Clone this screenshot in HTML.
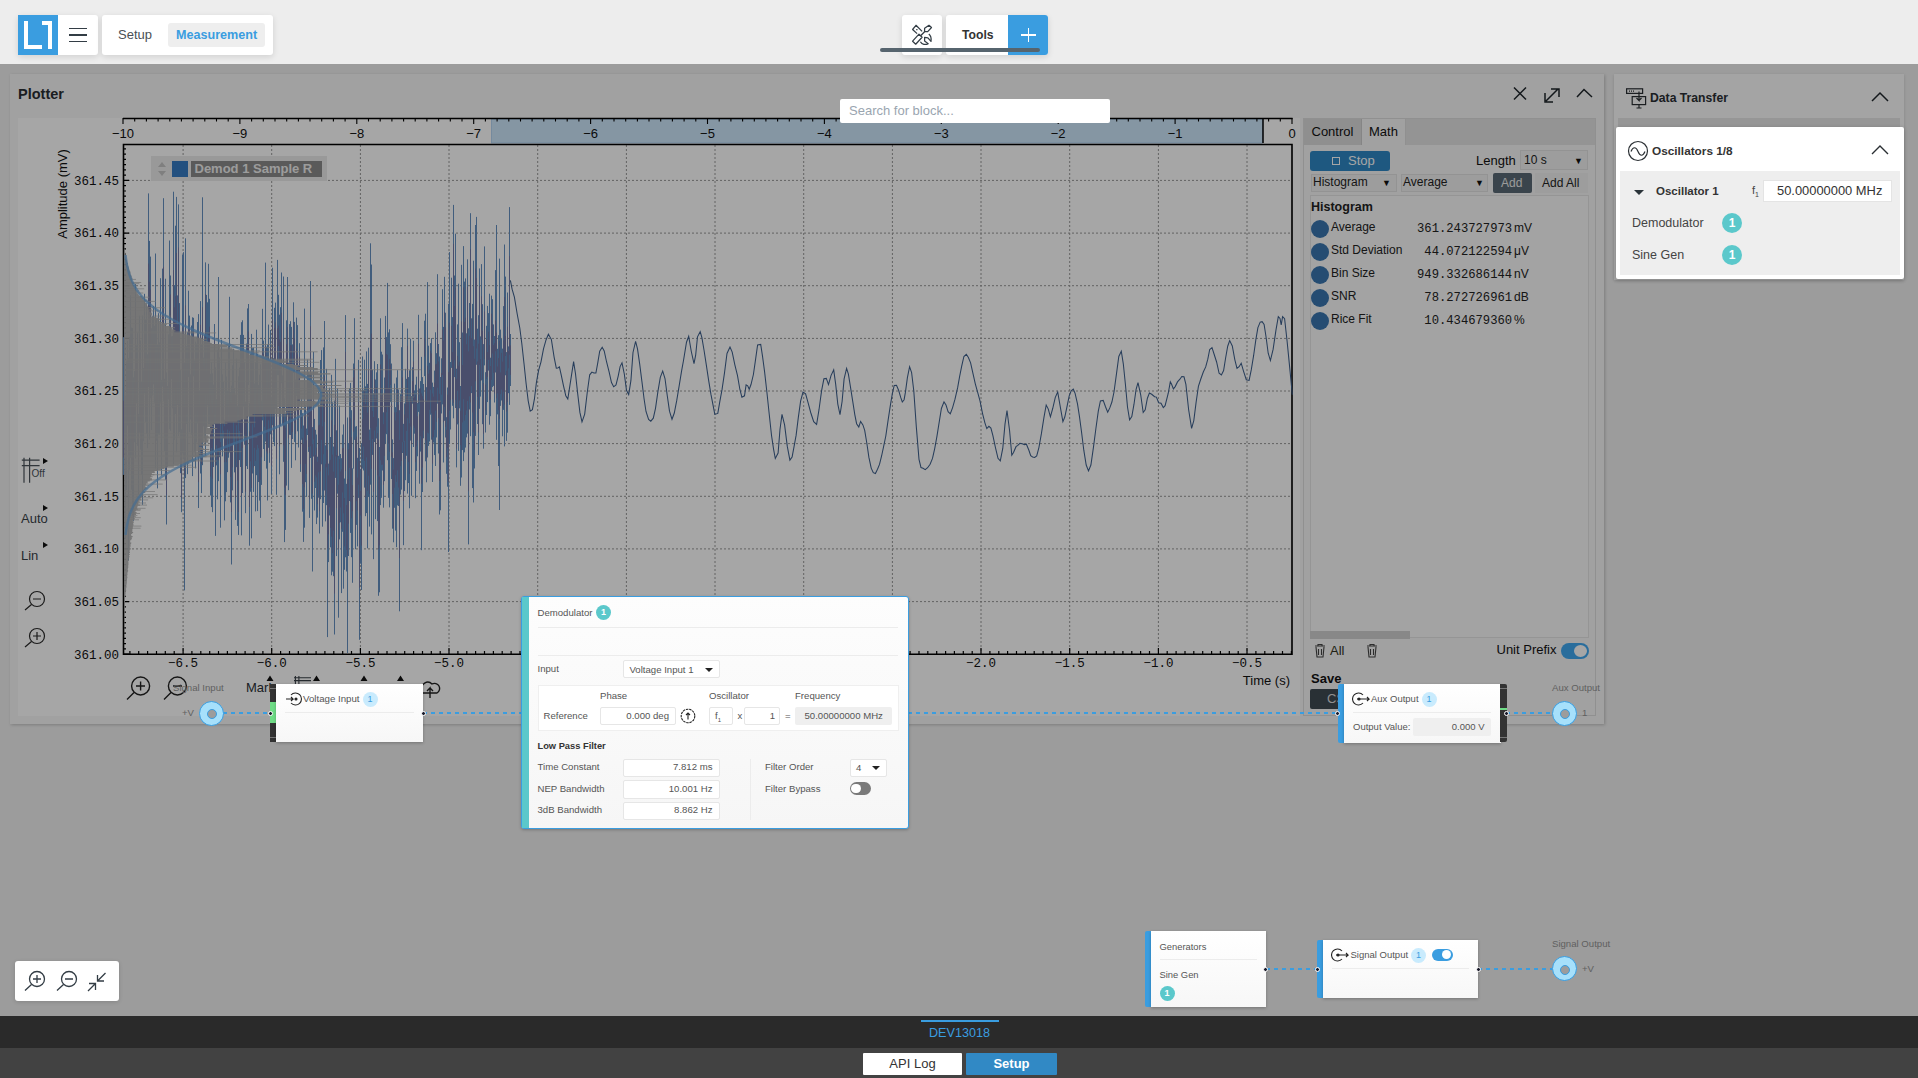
<!DOCTYPE html>
<html><head><meta charset="utf-8">
<style>
*{box-sizing:border-box}
html,body{margin:0;padding:0}
body{width:1918px;height:1078px;overflow:hidden;position:relative;background:#f0f0f0;font-family:"Liberation Sans",sans-serif;color:#333}
.abs{position:absolute}
.hdr{left:0;top:0;width:1918px;height:64px;background:#ededed}
.btn{position:absolute;background:#fff;border-radius:3px;box-shadow:0 2px 6px rgba(0,0,0,.12)}
.ovl{position:absolute;left:0;top:64px;width:1918px;height:952px;background:rgba(0,0,0,.35);z-index:50}
.hi{z-index:60}
.ftr{left:0;top:1016px;width:1918px;height:62px;background:#424242;z-index:70}
.blk{position:absolute;background:linear-gradient(#fff,#f7f7f7);box-shadow:0 1px 3px rgba(0,0,0,.25);z-index:60;font-size:9.5px;color:#555}
.badge{position:absolute;border-radius:50%;color:#fff;font-weight:bold;text-align:center}
.dot{position:absolute;width:5px;height:5px;margin:0.5px;border-radius:50%;background:#1a1a2a;border:0.8px solid #fff;z-index:62}
.conn{position:absolute;width:25px;height:25px;border-radius:50%;background:#a6e0fb;border:1.2px solid #3a9de0;z-index:60}
.conn::after{content:"";position:absolute;left:7.5px;top:7.5px;width:8px;height:8px;border-radius:50%;background:#9c9c9c;border:1px solid #3a9de0}
.dash{position:absolute;height:2px;z-index:59;background:repeating-linear-gradient(90deg,#3a9de0 0 4px,transparent 4px 8px)}
.inp{position:absolute;background:#fff;border:1px solid #e6e6e6;border-radius:2px}
.lbl{position:absolute;white-space:nowrap}
</style></head><body>
<!-- HEADER -->
<div class="abs hdr">
  <div class="btn" style="left:18px;top:15px;width:80px;height:40px;"></div>
  <div class="abs" style="left:18px;top:15px;width:40px;height:40px;background:#3a9de0">
    <div class="abs" style="left:6px;top:6px;width:4px;height:28px;background:#fff"></div>
    <div class="abs" style="left:6px;top:30px;width:18px;height:4px;background:#fff"></div>
    <div class="abs" style="left:24px;top:6px;width:10px;height:4px;background:#fff"></div>
    <div class="abs" style="left:30px;top:6px;width:4px;height:28px;background:#fff"></div>
  </div>
  <div class="abs" style="left:69px;top:27.5px;width:18px;height:1.6px;background:#333d45"></div>
  <div class="abs" style="left:69px;top:34px;width:18px;height:1.6px;background:#333d45"></div>
  <div class="abs" style="left:69px;top:40.5px;width:18px;height:1.6px;background:#333d45"></div>
  <div class="btn" style="left:102px;top:15px;width:171px;height:40px;"></div>
  <div class="lbl" style="left:118px;top:27px;font-size:13px;line-height:16px;color:#4a4f55">Setup</div>
  <div class="abs" style="left:168px;top:23px;width:97px;height:24px;background:#eeeeee;border-radius:3px"></div>
  <div class="lbl" style="left:176px;top:27px;font-size:12.6px;line-height:16px;font-weight:bold;color:#3a9de0">Measurement</div>
  <div class="btn" style="left:901.5px;top:15px;width:40px;height:40px;"></div>
  <svg class="abs" style="left:901.5px;top:15px" width="40" height="40" viewBox="0 0 40 40" fill="none" stroke="#333d45" stroke-width="1.25" stroke-linejoin="round">
    <path d="M20.1,16.4 L14,10.3 L10.6,14.5 L15.1,18.6 M14.2,14.6 h1.3"/>
    <path d="M22.6,16.7 L22.6,13.3 L27,10.3 L29.5,12.5 L25.7,16.7 Z M22.6,16.7 L18.6,20.8"/>
    <path d="M17,19.2 L20.1,22.3 L13.7,29.2 L10.6,26.2 Z"/>
    <path d="M26.8,18.9 C28.8,20.5 29.5,23 29,26.4 L25.9,22.8 L22.6,22.3 L22.6,26 L26.2,28.7 C23.5,30.2 20,29.5 18.4,26.7"/>
  </svg>
  <div class="btn" style="left:945.5px;top:15px;width:102.5px;height:40px;"></div>
  <div class="lbl" style="left:962px;top:27px;font-size:12.2px;line-height:16px;font-weight:bold;color:#333">Tools</div>
  <div class="abs" style="left:1008.3px;top:15px;width:39.7px;height:40px;background:#3a9de0;border-radius:0 3px 3px 0"></div>
  <div class="abs" style="left:1021px;top:34.3px;width:14.5px;height:1.5px;background:#fff"></div>
  <div class="abs" style="left:1027.5px;top:27.5px;width:1.5px;height:14.5px;background:#fff"></div>
  <div class="abs" style="left:880px;top:48px;width:160px;height:4px;border-radius:2px;background:#56646e"></div>
</div>

<!-- PLOTTER PANEL (under overlay) -->
<div class="abs" style="left:10px;top:74px;width:1594px;height:650px;background:#f7f7f7;box-shadow:1px 1px 3px rgba(0,0,0,.2)">
</div>
<div class="lbl" style="left:18px;top:86px;font-size:14.5px;line-height:17px;font-weight:bold;color:#2a2f33">Plotter</div>
<svg class="abs" style="left:1510px;top:84px" width="90" height="20" fill="none" stroke="#1f262b" stroke-width="1.5">
  <path d="M4,3.5 L16,15.5 M16,3.5 L4,15.5"/>
  <path d="M36,17 L48,5 M41,5 H49 V13 M35,9 V18 H43"/>
  <path d="M67,13 L74,5.5 L82,13"/>
</svg>
<div class="abs" style="left:18px;top:118px;width:1282px;height:598px;background:#fff"></div>
<svg class="abs" style="left:0;top:0" width="1918" height="1078" font-family="Liberation Mono" font-size="12.5" fill="#111">
<rect x="491.5" y="119" width="771" height="24" fill="#cde6fb" stroke="#a8cdf0" stroke-width="0.8"/><path d="M123,118.6H1292.6 M1263,118.6V143" stroke="#000" stroke-width="1.5"/><path d="M123.0,118V124 M134.7,118V121.5 M146.4,118V121.5 M158.1,118V121.5 M169.8,118V121.5 M181.4,118V121.5 M193.1,118V121.5 M204.8,118V121.5 M216.5,118V121.5 M228.2,118V121.5 M239.9,118V124 M251.6,118V121.5 M263.3,118V121.5 M275.0,118V121.5 M286.7,118V121.5 M298.4,118V121.5 M310.0,118V121.5 M321.7,118V121.5 M333.4,118V121.5 M345.1,118V121.5 M356.8,118V124 M368.5,118V121.5 M380.2,118V121.5 M391.9,118V121.5 M403.6,118V121.5 M415.2,118V121.5 M426.9,118V121.5 M438.6,118V121.5 M450.3,118V121.5 M462.0,118V121.5 M473.7,118V124 M485.4,118V121.5 M497.1,118V121.5 M508.8,118V121.5 M520.5,118V121.5 M532.1,118V121.5 M543.8,118V121.5 M555.5,118V121.5 M567.2,118V121.5 M578.9,118V121.5 M590.6,118V124 M602.3,118V121.5 M614.0,118V121.5 M625.7,118V121.5 M637.4,118V121.5 M649.0,118V121.5 M660.7,118V121.5 M672.4,118V121.5 M684.1,118V121.5 M695.8,118V121.5 M707.5,118V124 M719.2,118V121.5 M730.9,118V121.5 M742.6,118V121.5 M754.3,118V121.5 M765.9,118V121.5 M777.6,118V121.5 M789.3,118V121.5 M801.0,118V121.5 M812.7,118V121.5 M824.4,118V124 M836.1,118V121.5 M847.8,118V121.5 M859.5,118V121.5 M871.2,118V121.5 M882.9,118V121.5 M894.5,118V121.5 M906.2,118V121.5 M917.9,118V121.5 M929.6,118V121.5 M941.3,118V124 M953.0,118V121.5 M964.7,118V121.5 M976.4,118V121.5 M988.1,118V121.5 M999.8,118V121.5 M1011.4,118V121.5 M1023.1,118V121.5 M1034.8,118V121.5 M1046.5,118V121.5 M1058.2,118V124 M1069.9,118V121.5 M1081.6,118V121.5 M1093.3,118V121.5 M1105.0,118V121.5 M1116.7,118V121.5 M1128.3,118V121.5 M1140.0,118V121.5 M1151.7,118V121.5 M1163.4,118V121.5 M1175.1,118V124 M1186.8,118V121.5 M1198.5,118V121.5 M1210.2,118V121.5 M1221.9,118V121.5 M1233.5,118V121.5 M1245.2,118V121.5 M1256.9,118V121.5 M1268.6,118V121.5 M1280.3,118V121.5 M1292.0,118V124" stroke="#000" stroke-width="1.1"/><text x="123.0" y="138" text-anchor="middle" font-size="13" font-family="Liberation Sans">−10</text><text x="239.9" y="138" text-anchor="middle" font-size="13" font-family="Liberation Sans">−9</text><text x="356.8" y="138" text-anchor="middle" font-size="13" font-family="Liberation Sans">−8</text><text x="473.7" y="138" text-anchor="middle" font-size="13" font-family="Liberation Sans">−7</text><text x="590.6" y="138" text-anchor="middle" font-size="13" font-family="Liberation Sans">−6</text><text x="707.5" y="138" text-anchor="middle" font-size="13" font-family="Liberation Sans">−5</text><text x="824.4" y="138" text-anchor="middle" font-size="13" font-family="Liberation Sans">−4</text><text x="941.3" y="138" text-anchor="middle" font-size="13" font-family="Liberation Sans">−3</text><text x="1058.2" y="138" text-anchor="middle" font-size="13" font-family="Liberation Sans">−2</text><text x="1175.1" y="138" text-anchor="middle" font-size="13" font-family="Liberation Sans">−1</text><text x="1292.0" y="138" text-anchor="middle" font-size="13" font-family="Liberation Sans">0</text>
<path d="M183.1,145V653 M271.7,145V653 M360.4,145V653 M449.0,145V653 M537.7,145V653 M626.4,145V653 M715.0,145V653 M803.7,145V653 M892.4,145V653 M981.0,145V653 M1069.7,145V653 M1158.4,145V653 M1247.0,145V653 M124,601.6H1291 M124,548.9H1291 M124,496.3H1291 M124,443.6H1291 M124,391.0H1291 M124,338.4H1291 M124,285.7H1291 M124,233.1H1291 M124,180.4H1291" stroke="#989898" stroke-width="1" stroke-dasharray="2,2" fill="none"/><path d="M123.5,144.5H1292V654.2H123.5Z" stroke="#000" stroke-width="1.6" fill="none"/><path d="M129.9,654V651 M138.7,654V651 M147.6,654V651 M156.5,654V651 M165.3,654V651 M174.2,654V651 M183.1,654V648 M191.9,654V651 M200.8,654V651 M209.7,654V651 M218.5,654V651 M227.4,654V651 M236.3,654V651 M245.1,654V651 M254.0,654V651 M262.9,654V651 M271.7,654V648 M280.6,654V651 M289.5,654V651 M298.3,654V651 M307.2,654V651 M316.1,654V651 M324.9,654V651 M333.8,654V651 M342.7,654V651 M351.5,654V651 M360.4,654V648 M369.3,654V651 M378.1,654V651 M387.0,654V651 M395.9,654V651 M404.7,654V651 M413.6,654V651 M422.5,654V651 M431.3,654V651 M440.2,654V651 M449.0,654V648 M457.9,654V651 M466.8,654V651 M475.6,654V651 M484.5,654V651 M493.4,654V651 M502.2,654V651 M511.1,654V651 M520.0,654V651 M528.8,654V651 M537.7,654V648 M546.6,654V651 M555.4,654V651 M564.3,654V651 M573.2,654V651 M582.0,654V651 M590.9,654V651 M599.8,654V651 M608.6,654V651 M617.5,654V651 M626.4,654V648 M635.2,654V651 M644.1,654V651 M653.0,654V651 M661.8,654V651 M670.7,654V651 M679.6,654V651 M688.4,654V651 M697.3,654V651 M706.2,654V651 M715.0,654V648 M723.9,654V651 M732.8,654V651 M741.6,654V651 M750.5,654V651 M759.4,654V651 M768.2,654V651 M777.1,654V651 M786.0,654V651 M794.8,654V651 M803.7,654V648 M812.6,654V651 M821.4,654V651 M830.3,654V651 M839.2,654V651 M848.0,654V651 M856.9,654V651 M865.8,654V651 M874.6,654V651 M883.5,654V651 M892.4,654V648 M901.2,654V651 M910.1,654V651 M919.0,654V651 M927.8,654V651 M936.7,654V651 M945.6,654V651 M954.4,654V651 M963.3,654V651 M972.2,654V651 M981.0,654V648 M989.9,654V651 M998.8,654V651 M1007.6,654V651 M1016.5,654V651 M1025.4,654V651 M1034.2,654V651 M1043.1,654V651 M1052.0,654V651 M1060.8,654V651 M1069.7,654V648 M1078.6,654V651 M1087.4,654V651 M1096.3,654V651 M1105.2,654V651 M1114.0,654V651 M1122.9,654V651 M1131.8,654V651 M1140.6,654V651 M1149.5,654V651 M1158.4,654V648 M1167.2,654V651 M1176.1,654V651 M1185.0,654V651 M1193.8,654V651 M1202.7,654V651 M1211.6,654V651 M1220.4,654V651 M1229.3,654V651 M1238.2,654V651 M1247.0,654V648 M1255.9,654V651 M1264.8,654V651 M1273.6,654V651 M1282.5,654V651 M1291.4,654V651 M123,654.2H129 M123,648.9H126 M123,643.7H126 M123,638.4H126 M123,633.1H126 M123,627.9H126 M123,622.6H126 M123,617.4H126 M123,612.1H126 M123,606.8H126 M123,601.6H129 M123,596.3H126 M123,591.0H126 M123,585.8H126 M123,580.5H126 M123,575.2H126 M123,570.0H126 M123,564.7H126 M123,559.4H126 M123,554.2H126 M123,548.9H129 M123,543.7H126 M123,538.4H126 M123,533.1H126 M123,527.9H126 M123,522.6H126 M123,517.3H126 M123,512.1H126 M123,506.8H126 M123,501.5H126 M123,496.3H129 M123,491.0H126 M123,485.8H126 M123,480.5H126 M123,475.2H126 M123,470.0H126 M123,464.7H126 M123,459.4H126 M123,454.2H126 M123,448.9H126 M123,443.6H129 M123,438.4H126 M123,433.1H126 M123,427.8H126 M123,422.6H126 M123,417.3H126 M123,412.1H126 M123,406.8H126 M123,401.5H126 M123,396.3H126 M123,391.0H129 M123,385.7H126 M123,380.5H126 M123,375.2H126 M123,369.9H126 M123,364.7H126 M123,359.4H126 M123,354.2H126 M123,348.9H126 M123,343.6H126 M123,338.4H129 M123,333.1H126 M123,327.8H126 M123,322.6H126 M123,317.3H126 M123,312.0H126 M123,306.8H126 M123,301.5H126 M123,296.2H126 M123,291.0H126 M123,285.7H129 M123,280.5H126 M123,275.2H126 M123,269.9H126 M123,264.7H126 M123,259.4H126 M123,254.1H126 M123,248.9H126 M123,243.6H126 M123,238.3H126 M123,233.1H129 M123,227.8H126 M123,222.6H126 M123,217.3H126 M123,212.0H126 M123,206.8H126 M123,201.5H126 M123,196.2H126 M123,191.0H126 M123,185.7H126 M123,180.4H129 M123,175.2H126 M123,169.9H126 M123,164.6H126 M123,159.4H126 M123,154.1H126 M123,148.9H126" stroke="#000" stroke-width="1.2" fill="none"/>
<g font-family="Liberation Sans" font-size="13"><text x="1290" y="685" text-anchor="end">Time (s)</text>
<text transform="translate(67,194) rotate(-90)" text-anchor="middle">Amplitude (mV)</text></g>
<path d="M123.5,337.2V474.9M124.5,333.4V439.1M125.5,396.1V539.1M126.5,361.2V490.1M127.5,340.7V425.6M128.5,357.8V560.6M129.5,336.9V469.8M130.5,295.2V457.7M131.5,327.5V489.8M132.5,328.0V516.3M133.5,377.3V520.8M134.5,371.0V442.3M135.5,284.1V458.5M136.5,345.3V403.0M137.5,332.7V445.9M138.5,413.8V494.9M139.5,315.7V432.7M140.5,340.4V449.7M141.5,381.7V474.9M142.5,315.4V504.8M143.5,367.9V441.3M144.5,293.8V393.3M145.5,319.4V422.1M146.5,304.4V433.8M147.5,354.2V448.3M148.5,193.4V387.2M149.5,240.9V439.6M150.5,256.6V398.3M151.5,328.1V430.0M152.5,316.3V395.6M153.5,306.1V384.4M154.5,325.7V402.7M155.5,253.5V468.5M156.5,318.6V440.8M157.5,344.9V488.4M158.5,313.2V434.5M159.5,342.3V434.9M160.5,278.2V402.6M161.5,379.8V475.6M162.5,268.6V386.8M163.5,198.2V400.9M164.5,378.7V451.0M165.5,278.7V479.8M166.5,372.3V524.5M167.5,386.0V466.7M168.5,334.3V399.4M169.5,240.5V429.2M170.5,275.5V430.9M171.5,336.3V379.2M172.5,335.9V408.4M173.5,191.7V464.4M174.5,285.1V439.9M175.5,225.7V414.0M176.5,196.9V452.5M177.5,295.4V405.0M178.5,204.4V436.0M179.5,303.1V432.3M180.5,370.1V473.2M181.5,429.2V512.2M182.5,254.6V453.3M183.5,252.2V459.3M184.5,362.6V590.4M185.5,238.3V478.1M186.5,346.1V424.1M187.5,332.1V474.2M188.5,290.7V377.2M189.5,315.6V432.3M190.5,374.3V419.6M191.5,325.5V434.9M192.5,317.3V476.1M193.5,317.8V376.4M194.5,360.5V452.4M195.5,341.6V468.4M196.5,343.6V442.5M197.5,322.0V423.5M198.5,314.1V508.0M199.5,390.5V457.0M200.5,301.1V473.5M201.5,344.1V493.1M202.5,197.3V465.2M203.5,357.6V426.5M204.5,334.4V438.2M205.5,262.4V455.5M206.5,294.9V427.4M207.5,302.3V405.5M208.5,263.8V424.0M209.5,298.8V424.0M210.5,373.7V495.5M211.5,362.0V507.1M212.5,373.2V512.2M213.5,384.5V467.0M214.5,324.0V424.2M215.5,367.3V535.9M216.5,399.1V465.4M217.5,349.8V499.3M218.5,277.0V481.2M219.5,357.3V457.2M220.5,423.8V527.7M221.5,339.7V450.2M222.5,374.3V456.4M223.5,382.0V438.4M224.5,419.6V520.4M225.5,362.5V501.3M226.5,376.4V492.1M227.5,390.7V472.2M228.5,346.2V457.7M229.5,296.8V452.5M230.5,392.0V502.4M231.5,385.6V564.5M232.5,365.1V490.4M233.5,348.8V444.8M234.5,388.0V472.4M235.5,394.7V519.9M236.5,358.6V467.2M237.5,405.7V525.9M238.5,376.2V534.9M239.5,367.4V460.1M240.5,334.9V467.0M241.5,322.2V535.4M242.5,320.3V493.0M243.5,334.9V406.4M244.5,362.0V444.7M245.5,401.9V513.2M246.5,343.5V466.1M247.5,308.4V469.0M248.5,304.0V385.1M249.5,403.2V545.7M250.5,353.6V491.8M251.5,333.9V538.4M252.5,348.2V473.5M253.5,347.6V491.9M254.5,383.4V466.1M255.5,362.0V511.4M256.5,329.7V475.2M257.5,353.8V511.1M258.5,384.8V482.0M259.5,374.6V500.6M260.5,364.2V517.9M261.5,400.6V484.9M262.5,308.8V420.4M263.5,340.6V449.0M264.5,357.5V461.0M265.5,262.6V441.6M266.5,346.7V468.6M267.5,344.5V500.5M268.5,324.6V447.8M269.5,361.1V462.8M270.5,330.0V434.3M271.5,397.3V494.0M272.5,267.7V425.2M273.5,358.2V442.0M274.5,307.8V446.1M275.5,302.6V408.9M276.5,361.4V494.8M277.5,259.9V375.2M278.5,294.8V375.3M279.5,314.7V474.3M280.5,307.2V426.0M281.5,272.5V383.3M282.5,375.3V424.7M283.5,276.5V461.8M284.5,398.2V542.1M285.5,414.0V529.9M286.5,320.3V485.6M287.5,277.0V414.9M288.5,362.8V490.2M289.5,324.1V434.8M290.5,321.2V435.0M291.5,326.9V467.9M292.5,344.4V439.0M293.5,302.3V373.0M294.5,321.9V441.9M295.5,379.4V460.3M296.5,317.6V396.0M297.5,325.1V431.3M298.5,366.1V447.5M299.5,343.2V406.0M300.5,410.0V471.9M301.5,398.3V439.8M302.5,413.2V511.7M303.5,425.5V541.9M304.5,308.6V527.7M305.5,404.8V482.2M306.5,428.5V496.9M307.5,359.5V435.0M308.5,372.2V451.9M309.5,373.7V517.9M310.5,281.0V458.0M311.5,373.3V498.8M312.5,427.1V571.5M313.5,351.9V456.6M314.5,418.9V510.5M315.5,429.8V488.0M316.5,434.5V524.1M317.5,456.7V517.6M318.5,390.2V497.7M319.5,406.5V533.5M320.5,360.0V499.2M321.5,350.1V464.3M322.5,389.6V526.7M323.5,347.4V503.0M324.5,321.0V490.5M325.5,445.3V521.4M326.5,368.8V505.2M327.5,392.3V637.1M328.5,463.6V562.1M329.5,387.7V515.5M330.5,437.0V547.3M331.5,374.8V575.3M332.5,402.3V571.7M333.5,446.5V576.2M334.5,400.6V634.5M335.5,358.8V477.9M336.5,430.3V556.1M337.5,388.4V493.7M338.5,455.8V617.7M339.5,405.6V539.4M340.5,454.0V522.3M341.5,458.2V593.1M342.5,434.6V531.8M343.5,424.4V588.7M344.5,478.5V569.8M345.5,315.1V557.3M346.5,483.8V571.5M347.5,417.5V653.0M348.5,443.0V556.0M349.5,388.2V501.0M350.5,382.9V532.9M351.5,410.2V557.2M352.5,468.3V582.8M353.5,363.5V468.7M354.5,318.2V439.9M355.5,426.6V549.2M356.5,426.1V524.9M357.5,457.8V546.4M358.5,359.9V497.9M359.5,448.0V639.8M360.5,469.2V563.7M361.5,443.2V590.0M362.5,356.5V468.6M363.5,389.8V470.5M364.5,359.7V487.6M365.5,386.4V516.2M366.5,351.4V513.1M367.5,383.9V548.3M368.5,347.7V496.9M369.5,429.6V526.6M370.5,243.3V484.7M371.5,264.5V534.4M372.5,369.8V454.9M373.5,393.3V559.2M374.5,361.2V442.0M375.5,379.5V519.2M376.5,372.3V438.5M377.5,364.0V521.1M378.5,418.2V595.8M379.5,447.0V592.3M380.5,318.3V505.1M381.5,351.7V497.8M382.5,354.5V470.5M383.5,412.3V507.7M384.5,377.5V481.2M385.5,315.9V443.8M386.5,337.1V434.2M387.5,282.9V460.2M388.5,332.4V497.8M389.5,329.3V507.4M390.5,344.2V402.1M391.5,363.5V479.0M392.5,439.4V528.7M393.5,458.1V542.3M394.5,383.6V507.8M395.5,407.1V530.6M396.5,377.5V547.2M397.5,370.2V505.4M398.5,389.5V506.0M399.5,410.2V611.3M400.5,394.1V494.6M401.5,347.2V489.7M402.5,323.1V453.0M403.5,423.8V545.2M404.5,403.4V491.1M405.5,368.8V480.2M406.5,378.8V455.8M407.5,328.6V493.6M408.5,377.1V483.1M409.5,370.3V508.3M410.5,338.7V440.6M411.5,396.0V495.8M412.5,367.3V403.7M413.5,340.7V447.0M414.5,390.4V433.7M415.5,384.7V498.2M416.5,376.7V470.9M417.5,402.9V456.3M418.5,314.8V411.9M419.5,388.5V483.7M420.5,381.1V451.6M421.5,356.9V550.2M422.5,377.1V492.0M423.5,384.0V438.3M424.5,320.7V376.1M425.5,313.7V461.3M426.5,387.2V482.3M427.5,282.1V457.5M428.5,345.7V445.9M429.5,362.8V441.5M430.5,343.1V414.7M431.5,338.2V439.7M432.5,382.6V482.0M433.5,386.9V442.6M434.5,370.6V455.1M435.5,332.3V466.0M436.5,353.2V437.5M437.5,274.2V403.7M438.5,344.0V453.5M439.5,356.5V514.5M440.5,377.0V510.3M441.5,358.3V413.5M442.5,289.2V404.4M443.5,326.9V462.5M444.5,276.8V420.8M445.5,312.7V437.5M446.5,417.2V473.8M447.5,387.5V486.7M448.5,303.7V552.0M449.5,252.1V444.0M450.5,362.0V429.5M451.5,277.7V367.9M452.5,317.1V405.8M453.5,204.9V418.3M454.5,275.5V377.1M455.5,233.7V408.0M456.5,368.7V467.4M457.5,324.4V424.4M458.5,283.7V450.9M459.5,342.2V408.3M460.5,386.0V485.8M461.5,264.8V477.5M462.5,332.5V450.1M463.5,246.1V461.1M464.5,281.6V452.4M465.5,278.4V447.6M466.5,333.3V437.4M467.5,259.3V433.6M468.5,328.3V544.4M469.5,303.0V409.5M470.5,213.2V436.2M471.5,318.3V393.1M472.5,303.9V488.1M473.5,260.7V502.5M474.5,339.5V468.5M475.5,225.0V435.9M476.5,216.9V364.8M477.5,328.7V424.0M478.5,315.2V455.0M479.5,268.4V408.8M480.5,336.4V396.6M481.5,264.1V380.4M482.5,304.2V424.2M483.5,344.1V448.7M484.5,246.4V365.4M485.5,372.2V432.5M486.5,325.8V415.0M487.5,305.9V402.1M488.5,313.1V370.6M489.5,293.7V424.7M490.5,357.7V416.2M491.5,295.6V391.1M492.5,299.2V387.1M493.5,324.4V385.9M494.5,336.0V402.5M495.5,270.1V372.5M496.5,225.0V439.8M497.5,348.8V414.4M498.5,335.2V466.0M499.5,258.6V510.0M500.5,329.6V405.9M501.5,338.8V400.5M502.5,348.6V436.3M503.5,306.1V409.9M504.5,244.5V446.4M505.5,276.6V375.3M506.5,352.1V440.9M507.5,292.5V432.7M508.5,346.4V393.2M509.5,207.1V404.9M510.5,334.0V386.0" stroke="#6590c0" stroke-width="1" fill="none"/>
<path d="M123.5,400.6V457.5M124.5,395.6V425.3M125.5,434.8V479.7M126.5,380.2V459.1M127.5,382.0V420.0M128.5,394.6V466.5M129.5,376.8V459.7M130.5,339.8V405.2M131.5,356.1V442.4M132.5,405.1V473.8M133.5,397.8V475.5M134.5,382.3V414.3M135.5,305.2V411.3M136.5,359.8V382.2M137.5,360.4V424.4M138.5,421.9V465.4M139.5,334.9V379.6M140.5,357.6V421.2M141.5,394.1V441.6M142.5,342.4V430.0M143.5,382.4V410.1M144.5,334.6V387.4M145.5,356.0V411.5M146.5,369.5V418.7M147.5,365.1V405.0M148.5,263.6V336.3M149.5,281.8V408.1M150.5,289.6V343.3M151.5,345.7V401.5M152.5,340.1V385.1M153.5,344.4V372.9M154.5,342.1V388.3M155.5,398.9V451.9M156.5,353.9V425.5M157.5,384.1V429.3M158.5,346.6V391.4M159.5,365.6V411.4M160.5,325.3V362.7M161.5,387.7V426.0M162.5,315.5V341.9M163.5,266.9V389.9M164.5,390.2V433.7M165.5,326.7V438.2M166.5,385.7V494.9M167.5,406.9V435.7M168.5,344.4V376.2M169.5,337.9V418.0M170.5,294.5V387.9M171.5,347.5V366.7M172.5,353.9V392.5M173.5,270.0V434.7M174.5,307.3V389.4M175.5,296.1V400.6M176.5,253.0V424.3M177.5,324.6V381.5M178.5,247.4V420.2M179.5,337.4V372.5M180.5,380.5V415.8M181.5,441.9V497.6M182.5,327.6V427.8M183.5,331.1V440.5M184.5,406.6V475.8M185.5,305.4V430.2M186.5,376.1V414.0M187.5,358.6V413.8M188.5,326.7V358.2M189.5,327.5V416.8M190.5,388.8V410.0M191.5,365.8V421.6M192.5,338.4V452.6M193.5,329.5V366.9M194.5,375.2V433.9M195.5,359.2V413.8M196.5,358.0V419.0M197.5,353.9V411.0M198.5,336.4V482.1M199.5,405.2V441.0M200.5,324.8V446.4M201.5,348.3V464.1M202.5,307.2V435.8M203.5,365.1V412.1M204.5,368.8V427.0M205.5,294.0V394.2M206.5,371.7V414.6M207.5,342.9V393.8M208.5,334.3V406.6M209.5,326.6V377.6M210.5,395.1V476.5M211.5,403.7V448.1M212.5,413.0V478.7M213.5,400.2V425.9M214.5,338.7V414.1M215.5,420.7V466.1M216.5,407.1V445.2M217.5,379.8V459.5M218.5,348.7V460.4M219.5,396.3V449.5M220.5,442.1V474.3M221.5,389.8V434.1M222.5,389.3V424.1M223.5,407.1V430.7M224.5,426.3V462.2M225.5,395.2V450.6M226.5,415.0V462.2M227.5,405.0V429.6M228.5,421.1V453.8M229.5,369.9V431.3M230.5,402.1V477.0M231.5,403.0V512.0M232.5,392.7V467.4M233.5,392.3V422.1M234.5,392.8V436.4M235.5,411.2V497.4M236.5,376.4V425.2M237.5,420.7V480.6M238.5,437.0V512.0M239.5,383.1V431.0M240.5,364.1V441.9M241.5,358.4V496.2M242.5,356.6V448.1M243.5,350.4V388.5M244.5,387.6V434.6M245.5,408.5V491.8M246.5,362.1V445.4M247.5,344.1V421.9M248.5,331.6V368.9M249.5,431.4V507.0M250.5,394.0V461.3M251.5,362.4V487.9M252.5,380.5V424.2M253.5,389.4V467.5M254.5,427.4V447.9M255.5,412.4V460.8M256.5,393.4V449.7M257.5,387.2V444.9M258.5,405.3V448.2M259.5,411.9V482.2M260.5,392.8V479.9M261.5,410.7V457.4M262.5,350.6V384.6M263.5,354.1V416.9M264.5,364.9V426.9M265.5,345.8V411.8M266.5,398.8V451.4M267.5,386.2V453.6M268.5,357.4V420.3M269.5,391.9V452.9M270.5,347.2V413.1M271.5,408.9V465.6M272.5,319.3V404.4M273.5,370.5V432.2M274.5,328.0V404.4M275.5,322.4V383.0M276.5,413.0V458.7M277.5,328.3V366.4M278.5,325.6V346.0M279.5,339.3V446.3M280.5,341.9V389.2M281.5,312.7V364.2M282.5,380.3V401.2M283.5,338.5V445.3M284.5,425.9V487.5M285.5,427.8V495.0M286.5,344.3V420.3M287.5,326.9V382.2M288.5,401.5V438.3M289.5,364.9V418.8M290.5,345.1V386.2M291.5,345.3V440.1M292.5,382.4V432.1M293.5,322.0V359.4M294.5,338.4V422.8M295.5,393.4V434.0M296.5,348.7V388.6M297.5,354.4V414.6M298.5,391.2V419.8M299.5,356.9V400.4M300.5,441.3V464.2M301.5,414.3V428.6M302.5,437.8V484.0M303.5,443.6V508.9M304.5,413.5V487.2M305.5,410.7V463.9M306.5,440.3V473.8M307.5,381.7V416.1M308.5,410.0V447.0M309.5,405.8V499.2M310.5,326.3V446.2M311.5,395.6V456.7M312.5,444.1V493.6M313.5,386.2V439.4M314.5,429.5V481.7M315.5,455.0V475.4M316.5,447.6V477.4M317.5,461.9V504.1M318.5,425.4V472.3M319.5,424.7V511.3M320.5,404.8V471.4M321.5,391.3V439.8M322.5,426.4V490.5M323.5,386.4V454.3M324.5,375.8V421.8M325.5,463.9V495.4M326.5,401.4V467.3M327.5,449.7V548.3M328.5,475.4V534.3M329.5,461.5V507.3M330.5,459.8V527.9M331.5,420.3V536.6M332.5,454.6V553.1M333.5,471.6V530.6M334.5,424.9V593.6M335.5,394.2V456.4M336.5,455.0V508.1M337.5,408.9V457.3M338.5,484.8V548.7M339.5,459.1V522.9M340.5,471.5V507.5M341.5,469.5V528.8M342.5,448.4V492.4M343.5,447.9V513.3M344.5,498.0V546.4M345.5,351.9V471.1M346.5,505.0V549.8M347.5,479.1V555.5M348.5,449.4V523.6M349.5,417.2V467.8M350.5,418.3V501.6M351.5,437.1V518.3M352.5,485.1V511.2M353.5,377.4V431.7M354.5,367.6V420.1M355.5,438.9V529.9M356.5,436.6V501.2M357.5,477.6V510.5M358.5,402.3V484.7M359.5,461.1V587.7M360.5,490.9V515.5M361.5,465.6V545.5M362.5,419.1V459.1M363.5,399.4V446.5M364.5,391.1V460.9M365.5,404.0V497.6M366.5,395.4V457.3M367.5,412.6V490.9M368.5,369.1V475.7M369.5,440.2V494.1M370.5,340.2V428.0M371.5,333.6V468.8M372.5,411.0V439.0M373.5,417.0V491.8M374.5,379.0V430.5M375.5,398.5V469.9M376.5,387.0V426.7M377.5,433.2V475.3M378.5,439.5V548.9M379.5,476.5V545.3M380.5,364.5V460.2M381.5,395.7V464.8M382.5,394.0V464.6M383.5,424.2V484.9M384.5,393.2V455.8M385.5,337.6V433.4M386.5,354.0V412.2M387.5,354.9V405.6M388.5,388.0V443.6M389.5,358.9V451.9M390.5,364.4V385.0M391.5,403.9V456.8M392.5,452.4V494.0M393.5,469.6V528.2M394.5,412.4V487.7M395.5,420.4V475.1M396.5,412.1V481.8M397.5,389.2V470.3M398.5,404.7V487.5M399.5,439.9V558.1M400.5,401.7V466.2M401.5,396.3V461.0M402.5,377.4V442.1M403.5,441.9V500.8M404.5,414.5V440.8M405.5,404.0V459.0M406.5,395.9V430.9M407.5,345.8V418.2M408.5,401.1V462.1M409.5,423.3V473.9M410.5,396.5V426.6M411.5,400.8V444.3M412.5,381.1V396.3M413.5,361.4V425.6M414.5,397.2V427.8M415.5,394.8V462.2M416.5,400.6V446.3M417.5,416.3V440.4M418.5,343.7V403.6M419.5,414.2V469.8M420.5,388.2V436.3M421.5,393.4V483.7M422.5,396.2V467.5M423.5,399.1V430.6M424.5,337.9V356.6M425.5,383.6V440.4M426.5,401.1V459.2M427.5,365.8V432.7M428.5,373.7V433.4M429.5,369.9V409.8M430.5,350.8V389.6M431.5,353.3V413.3M432.5,393.5V463.6M433.5,396.6V437.1M434.5,382.6V429.9M435.5,364.4V410.7M436.5,363.8V421.9M437.5,323.6V387.7M438.5,361.4V418.1M439.5,393.8V481.0M440.5,401.2V469.9M441.5,372.9V394.7M442.5,329.6V375.1M443.5,340.4V422.2M444.5,312.3V406.8M445.5,327.5V426.8M446.5,429.9V457.2M447.5,394.7V448.2M448.5,372.2V481.9M449.5,322.6V410.6M450.5,367.7V400.2M451.5,325.8V359.7M452.5,352.1V399.3M453.5,243.9V402.9M454.5,306.0V360.3M455.5,287.9V400.1M456.5,378.8V448.7M457.5,355.8V390.8M458.5,365.7V423.0M459.5,361.7V400.6M460.5,410.8V445.2M461.5,321.4V450.1M462.5,365.1V422.4M463.5,287.4V399.2M464.5,321.9V420.6M465.5,317.7V415.0M466.5,344.3V410.4M467.5,287.0V401.0M468.5,351.4V491.2M469.5,335.7V396.3M470.5,249.2V402.5M471.5,338.2V386.1M472.5,318.5V412.5M473.5,346.2V432.3M474.5,358.7V449.8M475.5,268.5V381.3M476.5,278.1V348.5M477.5,361.5V396.8M478.5,343.7V432.4M479.5,286.0V364.9M480.5,359.2V380.8M481.5,296.3V339.4M482.5,330.7V379.6M483.5,383.0V433.7M484.5,311.5V359.1M485.5,384.6V410.4M486.5,339.0V379.0M487.5,352.1V376.8M488.5,331.7V359.8M489.5,345.1V400.2M490.5,366.0V399.6M491.5,313.7V379.9M492.5,324.4V353.5M493.5,345.1V372.8M494.5,343.2V393.5M495.5,320.5V351.2M496.5,332.6V398.3M497.5,366.5V393.4M498.5,358.1V410.2M499.5,340.7V418.8M500.5,372.4V394.1M501.5,352.8V389.5M502.5,361.6V408.5M503.5,340.4V391.7M504.5,297.0V404.7M505.5,336.1V356.0M506.5,370.8V411.5M507.5,326.7V401.8M508.5,351.0V368.3M509.5,256.2V354.7M510.5,345.4V374.8" stroke="#7c6490" stroke-width="1" fill="none" stroke-opacity="0.55"/>
<g fill="#b4b4b4" fill-opacity="0.7"><rect x="124" y="278.9" width="12.0" height="1"/><rect x="124" y="282.0" width="17.2" height="1"/><rect x="124" y="283.1" width="15.3" height="1"/><rect x="124" y="285.2" width="12.5" height="1"/><rect x="124" y="288.3" width="20.2" height="1"/><rect x="124" y="290.4" width="15.2" height="1"/><rect x="124" y="292.5" width="19.3" height="1"/><rect x="124" y="296.7" width="25.2" height="1"/><rect x="124" y="300.9" width="31.8" height="1"/><rect x="124" y="307.2" width="41.7" height="1"/><rect x="124" y="310.4" width="34.5" height="1"/><rect x="124" y="315.6" width="46.6" height="1"/><rect x="124" y="318.8" width="46.7" height="1"/><rect x="124" y="323.0" width="55.6" height="1"/><rect x="124" y="331.4" width="73.4" height="1"/><rect x="124" y="332.4" width="92.1" height="1"/><rect x="124" y="344.0" width="149.5" height="1"/><rect x="124" y="347.1" width="151.3" height="1"/><rect x="124" y="350.3" width="136.0" height="1"/><rect x="124" y="351.3" width="193.6" height="1"/><rect x="124" y="358.7" width="189.6" height="1"/><rect x="124" y="359.7" width="187.1" height="1"/><rect x="124" y="361.8" width="195.4" height="1"/><rect x="124" y="369.2" width="297.2" height="1"/><rect x="124" y="380.7" width="229.3" height="1"/><rect x="124" y="388.1" width="284.3" height="1"/><rect x="124" y="390.2" width="242.7" height="1"/><rect x="124" y="393.3" width="295.6" height="1"/><rect x="124" y="394.4" width="273.7" height="1"/><rect x="124" y="396.5" width="289.9" height="1"/><rect x="124" y="398.6" width="289.0" height="1"/><rect x="124" y="400.7" width="317.0" height="1"/><rect x="124" y="402.8" width="224.2" height="1"/><rect x="124" y="405.9" width="268.6" height="1"/><rect x="124" y="415.4" width="184.9" height="1"/><rect x="124" y="421.7" width="131.5" height="1"/><rect x="124" y="433.2" width="118.4" height="1"/><rect x="124" y="436.4" width="133.3" height="1"/><rect x="124" y="437.4" width="119.7" height="1"/><rect x="124" y="451.1" width="117.4" height="1"/><rect x="124" y="455.3" width="97.6" height="1"/><rect x="124" y="456.3" width="92.3" height="1"/><rect x="124" y="460.5" width="93.0" height="1"/><rect x="124" y="464.7" width="67.7" height="1"/><rect x="124" y="466.8" width="72.5" height="1"/><rect x="124" y="470.0" width="45.8" height="1"/><rect x="124" y="474.2" width="43.8" height="1"/><rect x="124" y="479.4" width="43.3" height="1"/><rect x="124" y="483.6" width="38.7" height="1"/><rect x="124" y="491.0" width="31.0" height="1"/><rect x="124" y="494.1" width="33.6" height="1"/><rect x="124" y="497.3" width="29.2" height="1"/><rect x="124" y="499.4" width="24.1" height="1"/><rect x="124" y="502.5" width="22.0" height="1"/><rect x="124" y="504.6" width="23.0" height="1"/><rect x="124" y="507.8" width="21.6" height="1"/><rect x="124" y="508.8" width="16.8" height="1"/><rect x="124" y="509.9" width="16.4" height="1"/><rect x="124" y="513.0" width="16.0" height="1"/><rect x="124" y="515.1" width="13.4" height="1"/><rect x="124" y="517.2" width="16.8" height="1"/><rect x="124" y="519.3" width="15.0" height="1"/><rect x="124" y="525.6" width="17.4" height="1"/><rect x="124" y="527.7" width="16.6" height="1"/></g>
<g fill="#b0b0b0" fill-opacity="0.92"><path d="M124.0,240.00 124.0,240.00 124.0,241.05 124.0,241.05 124.0,242.10 124.0,242.10 124.0,243.15 124.0,243.15 124.0,244.20 124.0,244.20 124.0,245.25 124.0,245.25 124.0,246.30 124.1,246.30 124.1,247.35 124.3,247.35 124.3,248.40 124.5,248.40 124.5,249.45 124.6,249.45 124.6,250.50 125.0,250.50 125.0,251.55 125.1,251.55 125.1,252.60 125.4,252.60 125.4,253.65 125.6,253.65 125.6,254.70 125.8,254.70 125.8,255.75 126.1,255.75 126.1,256.80 126.3,256.80 126.3,257.85 126.4,257.85 126.4,258.90 126.6,258.90 126.6,259.95 127.0,259.95 127.0,261.00 127.0,261.00 127.0,262.05 127.2,262.05 127.2,263.10 127.9,263.10 127.9,264.15 127.9,264.15 127.9,265.20 127.9,265.20 127.9,266.25 128.5,266.25 128.5,267.30 128.9,267.30 128.9,268.35 129.0,268.35 129.0,269.40 129.2,269.40 129.2,270.45 129.9,270.45 129.9,271.50 130.5,271.50 130.5,272.55 130.4,272.55 130.4,273.60 130.5,273.60 130.5,274.65 131.2,274.65 131.2,275.70 131.7,275.70 131.7,276.75 131.6,276.75 131.6,277.80 132.4,277.80 132.4,278.85 132.0,278.85 132.0,279.90 132.0,279.90 132.0,280.95 132.5,280.95 132.5,282.00 133.3,282.00 133.3,283.05 133.9,283.05 133.9,284.10 133.1,284.10 133.1,285.15 134.4,285.15 134.4,286.20 134.8,286.20 134.8,287.25 134.7,287.25 134.7,288.30 135.6,288.30 135.6,289.35 135.6,289.35 135.6,290.40 136.6,290.40 136.6,291.45 137.8,291.45 137.8,292.50 136.8,292.50 136.8,293.55 138.1,293.55 138.1,294.60 138.9,294.60 138.9,295.65 142.1,295.65 142.1,296.70 141.7,296.70 141.7,297.75 145.0,297.75 145.0,298.80 143.4,298.80 143.4,299.85 146.7,299.85 146.7,300.90 144.7,300.90 144.7,301.95 145.3,301.95 145.3,303.00 147.0,303.00 147.0,304.05 146.9,304.05 146.9,305.10 147.1,305.10 147.1,306.15 148.0,306.15 148.0,307.20 150.5,307.20 150.5,308.25 148.7,308.25 148.7,309.30 151.7,309.30 151.7,310.35 149.3,310.35 149.3,311.40 150.6,311.40 150.6,312.45 151.8,312.45 151.8,313.50 152.1,313.50 152.1,314.55 151.9,314.55 151.9,315.60 150.3,315.60 150.3,316.65 156.1,316.65 156.1,317.70 158.8,317.70 158.8,318.75 159.9,318.75 159.9,319.80 158.7,319.80 158.7,320.85 160.0,320.85 160.0,321.90 163.0,321.90 163.0,322.95 160.0,322.95 160.0,324.00 166.7,324.00 166.7,325.05 165.3,325.05 165.3,326.10 170.2,326.10 170.2,327.15 175.0,327.15 175.0,328.20 172.3,328.20 172.3,329.25 174.3,329.25 174.3,330.30 175.5,330.30 175.5,331.35 174.2,331.35 174.2,332.40 182.4,332.40 182.4,333.45 186.5,333.45 186.5,334.50 189.4,334.50 189.4,335.55 192.0,335.55 192.0,336.60 197.6,336.60 197.6,337.65 201.9,337.65 201.9,338.70 206.8,338.70 206.8,339.75 203.5,339.75 203.5,340.80 207.3,340.80 207.3,341.85 210.2,341.85 210.2,342.90 211.8,342.90 211.8,343.95 219.1,343.95 219.1,345.00 231.0,345.00 231.0,346.05 227.5,346.05 227.5,347.10 220.1,347.10 220.1,348.15 232.4,348.15 232.4,349.20 234.5,349.20 234.5,350.25 239.5,350.25 239.5,351.30 247.4,351.30 247.4,352.35 258.5,352.35 258.5,353.40 249.2,353.40 249.2,354.45 254.5,354.45 254.5,355.50 263.4,355.50 263.4,356.55 269.2,356.55 269.2,357.60 267.4,357.60 267.4,358.65 265.7,358.65 265.7,359.70 282.7,359.70 282.7,360.75 287.7,360.75 287.7,361.80 285.8,361.80 285.8,362.85 279.6,362.85 279.6,363.90 293.7,363.90 293.7,364.95 307.6,364.95 307.6,366.00 297.7,366.00 297.7,367.05 313.5,367.05 313.5,368.10 317.7,368.10 317.7,369.15 317.9,369.15 317.9,370.20 292.9,370.20 292.9,371.25 319.8,371.25 319.8,372.30 318.1,372.30 318.1,373.35 330.4,373.35 330.4,374.40 320.7,374.40 320.7,375.45 304.3,375.45 304.3,376.50 320.4,376.50 320.4,377.55 323.5,377.55 323.5,378.60 298.8,378.60 298.8,379.65 321.4,379.65 321.4,380.70 321.5,380.70 321.5,381.75 333.3,381.75 333.3,382.80 325.7,382.80 325.7,383.85 313.0,383.85 313.0,384.90 341.5,384.90 341.5,385.95 323.9,385.95 323.9,387.00 323.2,387.00 323.2,388.05 322.6,388.05 322.6,389.10 325.6,389.10 325.6,390.15 329.8,390.15 329.8,391.20 335.9,391.20 335.9,392.25 317.2,392.25 317.2,393.30 327.1,393.30 327.1,394.35 334.7,394.35 334.7,395.40 321.7,395.40 321.7,396.45 359.6,396.45 359.6,397.50 327.5,397.50 327.5,398.55 328.8,398.55 328.8,399.60 297.4,399.60 297.4,400.65 315.3,400.65 315.3,401.70 330.6,401.70 330.6,402.75 319.5,402.75 319.5,403.80 319.4,403.80 319.4,404.85 323.1,404.85 323.1,405.90 306.6,405.90 306.6,406.95 277.7,406.95 277.7,408.00 305.7,408.00 305.7,409.05 306.4,409.05 306.4,410.10 296.6,410.10 296.6,411.15 285.3,411.15 285.3,412.20 294.4,412.20 294.4,413.25 286.4,413.25 286.4,414.30 252.5,414.30 252.5,415.35 263.3,415.35 263.3,416.40 246.7,416.40 246.7,417.45 248.1,417.45 248.1,418.50 247.9,418.50 247.9,419.55 240.8,419.55 240.8,420.60 237.5,420.60 237.5,421.65 224.8,421.65 224.8,422.70 227.4,422.70 227.4,423.75 214.2,423.75 214.2,424.80 212.0,424.80 212.0,425.85 213.1,425.85 213.1,426.90 207.5,426.90 207.5,427.95 217.2,427.95 217.2,429.00 211.9,429.00 211.9,430.05 211.7,430.05 211.7,431.10 211.2,431.10 211.2,432.15 211.1,432.15 211.1,433.20 211.0,433.20 211.0,434.25 205.6,434.25 205.6,435.30 208.1,435.30 208.1,436.35 208.8,436.35 208.8,437.40 214.4,437.40 214.4,438.45 207.4,438.45 207.4,439.50 209.0,439.50 209.0,440.55 208.0,440.55 208.0,441.60 208.4,441.60 208.4,442.65 201.6,442.65 201.6,443.70 206.2,443.70 206.2,444.75 209.2,444.75 209.2,445.80 199.1,445.80 199.1,446.85 202.0,446.85 202.0,447.90 203.6,447.90 203.6,448.95 209.2,448.95 209.2,450.00 200.1,450.00 200.1,451.05 196.4,451.05 196.4,452.10 200.3,452.10 200.3,453.15 205.8,453.15 205.8,454.20 199.1,454.20 199.1,455.25 202.2,455.25 202.2,456.30 206.6,456.30 206.6,457.35 191.9,457.35 191.9,458.40 194.6,458.40 194.6,459.45 201.0,459.45 201.0,460.50 195.1,460.50 195.1,461.55 188.8,461.55 188.8,462.60 189.3,462.60 189.3,463.65 185.4,463.65 185.4,464.70 178.7,464.70 178.7,465.75 173.9,465.75 173.9,466.80 166.3,466.80 166.3,467.85 164.5,467.85 164.5,468.90 160.9,468.90 160.9,469.95 157.6,469.95 157.6,471.00 154.6,471.00 154.6,472.05 154.8,472.05 154.8,473.10 151.9,473.10 151.9,474.15 154.4,474.15 154.4,475.20 151.2,475.20 151.2,476.25 152.6,476.25 152.6,477.30 150.4,477.30 150.4,478.35 152.0,478.35 152.0,479.40 151.7,479.40 151.7,480.45 149.7,480.45 149.7,481.50 147.6,481.50 147.6,482.55 147.7,482.55 147.7,483.60 146.1,483.60 146.1,484.65 149.0,484.65 149.0,485.70 145.3,485.70 145.3,486.75 146.1,486.75 146.1,487.80 147.5,487.80 147.5,488.85 145.6,488.85 145.6,489.90 144.1,489.90 144.1,490.95 143.7,490.95 143.7,492.00 145.3,492.00 145.3,493.05 143.1,493.05 143.1,494.10 141.8,494.10 141.8,495.15 143.7,495.15 143.7,496.20 141.9,496.20 141.9,497.25 141.3,497.25 141.3,498.30 140.6,498.30 140.6,499.35 141.2,499.35 141.2,500.40 138.8,500.40 138.8,501.45 140.0,501.45 140.0,502.50 138.4,502.50 138.4,503.55 138.3,503.55 138.3,504.60 140.1,504.60 140.1,505.65 137.6,505.65 137.6,506.70 137.3,506.70 137.3,507.75 136.9,507.75 136.9,508.80 137.9,508.80 137.9,509.85 135.8,509.85 135.8,510.90 135.5,510.90 135.5,511.95 136.6,511.95 136.6,513.00 135.6,513.00 135.6,514.05 136.0,514.05 136.0,515.10 134.5,515.10 134.5,516.15 135.8,516.15 135.8,517.20 134.0,517.20 134.0,518.25 135.0,518.25 135.0,519.30 134.0,519.30 134.0,520.35 132.9,520.35 132.9,521.40 134.0,521.40 134.0,522.45 133.4,522.45 133.4,523.50 133.1,523.50 133.1,524.55 133.8,524.55 133.8,525.60 132.9,525.60 132.9,526.65 132.8,526.65 132.8,527.70 132.9,527.70 132.9,528.75 132.4,528.75 132.4,529.80 132.4,529.80 132.4,530.85 132.3,530.85 132.3,531.90 133.1,531.90 133.1,532.95 132.2,532.95 132.2,534.00 131.1,534.00 131.1,535.05 131.3,535.05 131.3,536.10 132.6,536.10 132.6,537.15 131.7,537.15 131.7,538.20 131.9,538.20 131.9,539.25 131.2,539.25 131.2,540.30 130.2,540.30 130.2,541.35 130.2,541.35 130.2,542.40 131.3,542.40 131.3,543.45 130.9,543.45 130.9,544.50 130.2,544.50 130.2,545.55 130.9,545.55 130.9,546.60 129.9,546.60 129.9,547.65 130.7,547.65 130.7,548.70 130.6,548.70 130.6,549.75 129.8,549.75 129.8,550.80 129.6,550.80 129.6,551.85 130.0,551.85 130.0,552.90 129.3,552.90 129.3,553.95 129.8,553.95 129.8,555.00 129.1,555.00 129.1,556.05 129.5,556.05 129.5,557.10 129.2,557.10 129.2,558.15 128.9,558.15 128.9,559.20 128.7,559.20 128.7,560.25 128.8,560.25 128.8,561.30 128.2,561.30 128.2,562.35 128.5,562.35 128.5,563.40 128.4,563.40 128.4,564.45 128.5,564.45 128.5,565.50 128.0,565.50 128.0,566.55 128.5,566.55 128.5,567.60 128.0,567.60 128.0,568.65 127.7,568.65 127.7,569.70 128.1,569.70 128.1,570.75 128.1,570.75 128.1,571.80 127.6,571.80 127.6,572.85 127.4,572.85 127.4,573.90 127.5,573.90 127.5,574.95 127.2,574.95 127.2,576.00 127.2,576.00 127.2,577.05 127.4,577.05 127.4,578.10 127.1,578.10 127.1,579.15 127.0,579.15 127.0,580.20 126.9,580.20 126.9,581.25 126.8,581.25 126.8,582.30 126.8,582.30 126.8,583.35 126.7,583.35 126.7,584.40 126.4,584.40 126.4,585.45 126.4,585.45 126.4,586.50 126.5,586.50 126.5,587.55 126.2,587.55 126.2,588.60 126.0,588.60 126.0,589.65 126.2,589.65 126.2,590.70 125.9,590.70 125.9,591.75 125.7,591.75 125.7,592.80 125.7,592.80 125.7,593.85 125.5,593.85 125.5,594.90 125.4,594.90 125.4,595.95 125.4,595.95 125.4,597.00 125.2,597.00 125.2,598.05 125.1,598.05 125.1,599.10 125.0,599.10 125.0,600.15 124.9,600.15 124.9,601.20 125.0,601.20 125.0,602.25 124.9,602.25 124.9,603.30 124.9,603.30 124.9,604.35 124.9,604.35 124.9,605.40 124.8,605.40 124.8,606.45 124.9,606.45 124.9,607.50 124.8,607.50 124.8,608.55 124.7,608.55 124.7,609.60 124.7,609.60 124.7,610.65 124.7,610.65 124.7,611.70 124.7,611.70 124.7,612.75 124.7,612.75 124.7,613.80 124.6,613.80 124.6,614.85 124.6,614.85 124.6,615.90 124.6,615.90 124.6,616.95 124.5,616.95 124.5,618.00 124.6,618.00 124.6,619.05 124.5,619.05 124.5,620.10 124.5,620.10 124.5,621.15 124.4,621.15 124.4,622.20 124.5,622.20 124.5,623.25 124.4,623.25 124.4,624.30 124.3,624.30 124.3,625.35 124.4,625.35 124.4,626.40 124.3,626.40 124.3,627.45 124.3,627.45 124.3,628.50 124.3,628.50 124.3,629.55 124.2,629.55 124.2,630.60 124.2,630.60 124.2,631.65 124.2,631.65 124.2,632.70 124.2,632.70 124.2,633.75 124.1,633.75 124.1,634.80 124.1,634.80 124.1,635.85 124.1,635.85 124.1,636.90 124.1,636.90 124.1,637.95 124.0,637.95 124.0,639.00 124.0,639.00 124.0,640.05 124.0,640.05 124.0,641.10 124.0,641.10 124.0,642.15 124.0,642.15 124.0,643.20 124.0,643.20 124.0,644.25 124.0,644.25 124.0,645.30 124.0,645.30 124.0,646.35 124.0,646.35 124.0,647.40 124.0,647.40 124.0,648.45 124.0,648.45 124.0,649.50 124.0,649.50 124.0,650.55 124.0,650.00Z"/></g>
<path d="M125.6,255.0 125.8,257.5 126.2,260.0 126.6,262.5 127.0,265.0 127.6,267.5 128.2,270.0 128.8,272.5 129.6,275.0 130.5,277.5 131.5,280.0 132.7,282.5 133.9,285.0 135.4,287.5 136.9,290.0 138.7,292.5 140.7,295.0 142.8,297.5 145.2,300.0 147.8,302.5 150.7,305.0 153.7,307.5 157.1,310.0 160.7,312.5 164.6,315.0 168.7,317.5 173.1,320.0 177.8,322.5 182.8,325.0 188.0,327.5 193.4,330.0 199.1,332.5 205.0,335.0 211.1,337.5 217.3,340.0 223.7,342.5 230.3,345.0 236.9,347.5 243.5,350.0 250.1,352.5 256.7,355.0 263.2,357.5 269.6,360.0 275.8,362.5 281.7,365.0 287.4,367.5 292.8,370.0 297.9,372.5 302.5,375.0 306.7,377.5 310.4,380.0 313.5,382.5 316.2,385.0 318.3,387.5 319.8,390.0 320.7,392.5 321.0,395.0 320.7,397.5 319.8,400.0 318.3,402.5 316.2,405.0 313.5,407.5 310.4,410.0 306.7,412.5 302.5,415.0 297.9,417.5 292.8,420.0 287.4,422.5 281.7,425.0 275.8,427.5 269.6,430.0 263.2,432.5 256.7,435.0 250.1,437.5 243.5,440.0 236.9,442.5 230.3,445.0 223.7,447.5 217.3,450.0 211.1,452.5 205.0,455.0 199.1,457.5 193.4,460.0 188.0,462.5 182.8,465.0 177.8,467.5 173.1,470.0 168.7,472.5 164.6,475.0 160.7,477.5 157.1,480.0 153.7,482.5 150.7,485.0 147.8,487.5 145.2,490.0 142.8,492.5 140.7,495.0 138.7,497.5 136.9,500.0 135.4,502.5 133.9,505.0 132.7,507.5 131.5,510.0 130.5,512.5 129.6,515.0 128.8,517.5 128.2,520.0 127.6,522.5 127.0,525.0 126.6,527.5 126.2,530.0 125.8,532.5 125.6,535.0" stroke="#6aa6e0" stroke-width="2.5" fill="none" stroke-opacity="0.7"/>
<path d="M510.4,280.3 512.1,289.2 514.4,297.2 517.2,314.0 519.8,328.0 521.8,343.5 524.0,363.5 526.1,383.5 528.2,400.8 530.2,411.1 532.4,409.7 534.4,399.2 536.4,382.7 538.6,370.4 541.0,361.8 543.5,348.8 546.1,339.7 548.4,334.3 551.4,339.6 554.1,357.1 556.3,368.2 557.8,368.0 559.4,366.9 561.2,374.8 563.4,385.4 565.8,395.9 567.8,399.0 570.7,380.3 573.6,361.7 575.5,373.7 577.7,393.8 579.9,412.4 582.0,421.8 584.7,414.1 587.3,392.0 589.7,374.8 591.9,372.1 593.9,373.0 595.9,373.0 597.8,362.7 599.7,351.2 602.2,347.2 604.2,351.0 606.6,362.0 609.1,371.9 611.5,382.6 613.7,386.8 616.0,385.0 618.2,376.1 620.1,366.6 622.0,362.8 624.3,374.0 626.5,390.3 628.7,394.6 630.9,380.7 633.0,352.5 635.6,341.4 637.5,348.9 639.7,364.1 641.9,381.4 644.1,399.0 646.0,411.5 648.6,419.5 650.8,421.2 653.3,418.2 655.5,408.3 657.9,391.7 660.3,377.4 662.7,371.1 665.0,378.5 667.2,395.3 669.5,411.2 672.0,419.3 674.3,413.0 676.7,400.7 679.2,385.7 681.6,370.9 683.5,360.5 686.5,342.2 688.7,336.3 691.3,351.5 694.0,363.7 695.7,354.8 697.5,336.8 700.2,331.7 701.9,337.6 704.0,350.0 706.3,364.9 708.6,380.1 710.9,394.2 713.0,404.8 714.8,414.4 717.8,413.4 719.9,401.2 722.1,389.2 724.5,372.8 727.0,353.5 730.0,347.1 732.2,352.1 734.8,364.6 737.5,375.7 739.9,389.5 741.9,397.3 744.5,395.8 746.1,384.9 747.7,385.9 749.2,389.3 751.0,384.5 753.4,374.5 755.3,361.4 757.6,344.9 760.7,344.4 762.5,356.1 764.6,371.9 766.9,392.2 769.2,414.0 771.5,435.3 773.6,449.3 775.3,458.5 778.1,453.1 780.0,429.2 782.0,414.4 784.6,424.9 787.3,446.4 789.9,460.1 792.1,457.0 794.0,446.9 796.1,435.4 798.3,417.6 800.6,401.2 803.0,392.0 805.6,393.8 808.2,403.2 810.7,412.5 813.7,421.7 816.6,424.5 819.0,409.7 821.6,390.7 823.9,378.8 826.3,378.4 828.5,384.6 831.0,375.6 833.7,369.9 835.7,384.4 837.8,404.1 840.0,414.7 842.1,401.5 844.1,378.9 846.6,368.4 848.4,374.2 850.5,387.1 852.7,401.1 854.8,414.6 856.6,423.7 858.8,427.0 860.6,421.4 862.9,424.9 864.7,430.4 866.8,443.0 868.9,457.4 871.2,468.1 873.3,472.7 875.4,473.5 877.5,469.3 879.5,464.4 881.6,456.0 883.7,446.2 885.8,436.0 888.0,420.9 890.2,406.4 892.3,393.8 894.2,385.4 896.5,385.2 898.7,390.5 900.7,397.4 902.3,402.0 904.1,399.7 905.4,392.4 907.4,377.7 909.6,366.7 911.6,372.5 913.8,391.0 916.3,426.6 919.0,459.3 921.0,467.5 923.0,468.3 925.2,469.6 927.6,467.7 930.1,464.2 932.5,458.4 934.7,448.6 936.8,437.1 938.8,424.6 941.4,408.5 944.0,401.9 946.0,405.0 948.1,411.7 950.3,413.8 952.6,407.6 955.0,399.2 957.6,387.9 959.6,376.6 961.7,366.2 963.9,356.5 966.3,354.3 968.4,357.5 970.6,362.9 973.0,373.7 975.3,383.8 977.4,391.3 980.0,400.9 982.5,413.3 984.9,422.8 986.8,428.6 988.9,426.3 990.9,428.1 992.9,435.6 995.4,447.3 998.0,458.3 1000.3,460.9 1002.8,448.2 1005.0,424.1 1007.0,410.5 1009.6,430.7 1011.8,455.2 1013.5,452.5 1016.0,446.7 1017.8,445.3 1019.9,443.3 1022.2,443.7 1024.5,444.6 1026.4,444.2 1028.8,450.0 1030.7,455.7 1032.6,457.0 1034.7,457.5 1036.7,456.0 1038.9,447.6 1041.4,433.7 1044.0,417.1 1046.2,405.0 1048.3,409.1 1050.4,416.8 1052.7,408.5 1055.3,397.4 1057.7,392.0 1060.2,406.4 1062.9,421.6 1064.8,417.0 1067.0,406.7 1069.2,395.9 1071.2,390.8 1073.3,389.2 1075.1,393.4 1077.5,403.9 1079.4,416.2 1081.5,431.8 1083.8,450.2 1086.2,465.0 1088.5,470.9 1090.9,465.0 1093.4,447.6 1095.9,428.5 1098.3,411.2 1100.4,401.0 1103.2,400.4 1105.5,406.7 1107.7,412.2 1109.8,407.9 1111.9,402.0 1114.0,392.0 1116.3,375.1 1118.8,356.5 1121.3,351.2 1123.3,363.8 1125.4,384.3 1127.5,407.0 1129.6,419.8 1131.8,416.5 1134.0,404.2 1136.1,389.3 1138.0,382.7 1140.7,394.8 1143.2,412.5 1145.2,409.9 1147.4,398.2 1149.4,393.1 1151.7,394.3 1154.6,396.7 1156.4,397.1 1158.7,402.8 1161.0,403.3 1163.3,407.6 1165.1,405.7 1168.2,393.5 1170.3,381.8 1171.6,384.3 1173.4,388.9 1175.2,386.6 1177.5,381.9 1179.9,379.2 1181.8,376.5 1184.0,376.8 1185.9,384.4 1188.6,409.5 1191.6,428.4 1193.8,420.6 1196.1,402.4 1198.4,386.4 1200.8,379.0 1203.3,372.0 1205.7,366.9 1207.8,359.2 1209.7,349.5 1212.0,347.6 1214.2,354.5 1216.6,362.0 1219.1,373.3 1221.4,374.9 1223.6,370.5 1225.7,357.5 1227.7,346.2 1229.7,340.6 1232.3,345.9 1234.8,359.6 1237.0,368.4 1239.1,366.7 1241.2,363.2 1243.5,371.1 1246.3,379.7 1249.1,380.4 1251.3,369.7 1253.6,355.7 1255.9,339.4 1257.9,327.6 1260.2,322.1 1262.1,321.7 1264.1,324.5 1266.1,337.2 1268.2,353.2 1270.4,360.6 1273.1,349.4 1276.0,329.9 1278.3,316.6 1280.0,318.4 1281.2,324.9 1282.6,316.6 1284.6,318.7 1287.1,341.3 1290.1,371.6 1292.3,394.7" stroke="#3d5f8c" stroke-width="1.05" fill="none"/>
<text x="183.1" y="667" text-anchor="middle">−6.5</text><text x="271.7" y="667" text-anchor="middle">−6.0</text><text x="360.4" y="667" text-anchor="middle">−5.5</text><text x="449.0" y="667" text-anchor="middle">−5.0</text><text x="537.7" y="667" text-anchor="middle">−4.5</text><text x="626.4" y="667" text-anchor="middle">−4.0</text><text x="715.0" y="667" text-anchor="middle">−3.5</text><text x="803.7" y="667" text-anchor="middle">−3.0</text><text x="892.4" y="667" text-anchor="middle">−2.5</text><text x="981.0" y="667" text-anchor="middle">−2.0</text><text x="1069.7" y="667" text-anchor="middle">−1.5</text><text x="1158.4" y="667" text-anchor="middle">−1.0</text><text x="1247.0" y="667" text-anchor="middle">−0.5</text><text x="119" y="658.5" text-anchor="end">361.00</text><text x="119" y="605.9" text-anchor="end">361.05</text><text x="119" y="553.2" text-anchor="end">361.10</text><text x="119" y="500.6" text-anchor="end">361.15</text><text x="119" y="447.9" text-anchor="end">361.20</text><text x="119" y="395.3" text-anchor="end">361.25</text><text x="119" y="342.7" text-anchor="end">361.30</text><text x="119" y="290.0" text-anchor="end">361.35</text><text x="119" y="237.4" text-anchor="end">361.40</text><text x="119" y="184.7" text-anchor="end">361.45</text>
</svg>
<!-- legend -->
<div class="abs" style="left:151px;top:156px;width:176px;height:25px;background:#ececec"></div>
<div class="abs" style="left:172px;top:161px;width:16px;height:16px;background:#377bc3"></div>
<svg class="abs" style="left:156px;top:160px" width="12" height="20"><path d="M2,7 L6,2 L10,7Z M2,11 L6,16 L10,11Z" fill="#c4c4c4"/></svg>
<div class="abs" style="left:191px;top:161px;width:131px;height:16px;background:#8a8a8a"></div>
<div class="lbl" style="left:194.5px;top:161px;font-size:13px;line-height:16px;font-weight:bold;color:#f0f0f0">Demod 1 Sample R</div>
<!-- left tools -->
<div class="lbl" style="left:31.5px;top:468px;font-size:10px;line-height:12px;color:#4a5259">Off</div>
<svg class="abs" style="left:18px;top:452px" width="36" height="200" fill="none" stroke="#2a2a2a" stroke-width="1.2">
 <path d="M6,5.8 V30.8 M11.6,5.8 V30.8 M3.8,8.2 H21.6 M3.8,13.6 H21.6" stroke="#4a5259"/>
 <path d="M25,6 l5,3 -5,3z M25,53 l5,3 -5,3z M25,90 l5,3 -5,3z" fill="#111" stroke="none"/>
 <circle cx="19" cy="147" r="7.5"/><path d="M15,147 h8 M13.5,152.5 L7,158"/>
 <circle cx="19" cy="184" r="7.5"/><path d="M15,184 h8 M19,180 v8 M13.5,189.5 L7,195"/>
</svg>
<div class="lbl" style="left:21px;top:510.5px;font-size:13px;color:#3a4148">Auto</div>
<div class="lbl" style="left:21px;top:547.5px;font-size:13px;color:#3a4148">Lin</div>
<!-- bottom tools -->
<svg class="abs" style="left:120px;top:670px" width="340" height="40" fill="none" stroke="#222" stroke-width="1.4">
 <circle cx="20.6" cy="16" r="9"/><path d="M16,16 h9 M20.6,11.5 v9 M14,22.5 L7,29.5"/>
 <circle cx="57.4" cy="16" r="9"/><path d="M53,16 h9 M51,22.5 L44,29.5"/>
 <path d="M146.5,11 l3.5,-5.5 3.5,5.5z M193,11 l3.5,-5.5 3.5,5.5z M240.5,11 l3.5,-5.5 3.5,5.5z M277,11 l3.5,-5.5 3.5,5.5z" fill="#111" stroke="none"/>
 <path d="M302,20 a6,6 0 0 1 10,-6 a5,5 0 0 1 5,9 h-15 a4,4 0 0 1 0,-3 M310,28 v-10 l-3,3 M310,18 l3,3"/>
</svg>
<div class="lbl" style="left:246px;top:680px;font-size:13px;color:#2a3036">Markers</div>
<svg class="abs" style="left:290px;top:672px" width="26" height="14" fill="none" stroke="#3a4148" stroke-width="1.1"><path d="M5.4,4 V14 M8.9,4 V14 M4,5.7 H21 M4,8.6 H21"/></svg>
<!-- math side panel -->
<div class="abs" style="left:1303px;top:118px;width:293px;height:598px;background:#f7f7f7;border:1px solid #ddd"></div>
<div class="abs" style="left:1304px;top:119px;width:291px;height:26px;background:#e4e4e4"></div>
<div class="abs" style="left:1304px;top:119px;width:58px;height:26px;background:#dcdcdc;border-right:1px solid #ccc"></div>
<div class="abs" style="left:1362px;top:119px;width:44px;height:26px;background:#f7f7f7;border-right:1px solid #ddd"></div>
<div class="lbl" style="left:1311.5px;top:124px;font-size:13px;line-height:15px;color:#111">Control</div>
<div class="lbl" style="left:1369px;top:124px;font-size:13px;line-height:15px;color:#111">Math</div>
<div class="abs" style="left:1310px;top:151px;width:80px;height:20px;background:#2e87c5;border-radius:3px"></div>
<div class="abs" style="left:1331.5px;top:157px;width:8px;height:8px;border:1px solid #fff"></div>
<div class="lbl" style="left:1348px;top:153px;font-size:13px;line-height:16px;color:#fff">Stop</div>
<div class="lbl" style="left:1476px;top:153px;font-size:13px;line-height:16px;color:#111">Length</div>
<div class="abs" style="left:1520px;top:150px;width:68px;height:20px;background:#f2f2f2;border:1px solid #e2e2e2"></div>
<div class="lbl" style="left:1524px;top:152px;font-size:12px;line-height:16px;color:#222">10 s</div>
<div class="lbl" style="left:1574px;top:153px;font-size:9px;line-height:16px;color:#111">&#9660;</div>
<div class="abs" style="left:1311px;top:174px;width:86px;height:18px;background:#f2f2f2;border:1px solid #e2e2e2"></div>
<div class="lbl" style="left:1313px;top:174px;font-size:12px;line-height:16px;color:#222">Histogram</div>
<div class="lbl" style="left:1382px;top:175px;font-size:9px;line-height:16px;color:#111">&#9660;</div>
<div class="abs" style="left:1401px;top:174px;width:87px;height:18px;background:#f2f2f2;border:1px solid #e2e2e2"></div>
<div class="lbl" style="left:1403px;top:174px;font-size:12px;line-height:16px;color:#222">Average</div>
<div class="lbl" style="left:1475px;top:175px;font-size:9px;line-height:16px;color:#111">&#9660;</div>
<div class="abs" style="left:1493px;top:173px;width:39px;height:20px;background:#5a6975;border-radius:2px"></div>
<div class="lbl" style="left:1501px;top:175px;font-size:12px;line-height:16px;color:#eee">Add</div>
<div class="abs" style="left:1535px;top:173px;width:53px;height:20px;background:#f2f2f2"></div>
<div class="lbl" style="left:1542px;top:175px;font-size:12px;line-height:16px;color:#222">Add All</div>
<div class="abs" style="left:1310px;top:195px;width:279px;height:443px;background:#fafafa;border:1px solid #e5e5e5"></div>
<div class="lbl" style="left:1311px;top:200px;font-size:12.5px;line-height:15px;font-weight:bold;color:#222">Histogram</div>
<div class="abs" style="left:1311px;top:220px;width:18px;height:18px;border-radius:50%;background:#3a76b0"></div>
<div class="lbl" style="left:1331px;top:220px;font-size:12px;line-height:14px;color:#222">Average</div>
<div class="lbl" style="left:1417px;top:221px;font-family:'Liberation Mono';font-size:12.2px;line-height:16px;color:#222;white-space:pre">361.243727973</div>
<div class="lbl" style="left:1514px;top:220px;font-size:12px;line-height:16px;color:#222">mV</div>
<div class="abs" style="left:1311px;top:243px;width:18px;height:18px;border-radius:50%;background:#3a76b0"></div>
<div class="lbl" style="left:1331px;top:243px;font-size:12px;line-height:14px;color:#222">Std Deviation</div>
<div class="lbl" style="left:1417px;top:244px;font-family:'Liberation Mono';font-size:12.2px;line-height:16px;color:#222;white-space:pre"> 44.072122594</div>
<div class="lbl" style="left:1514px;top:243px;font-size:12px;line-height:16px;color:#222">μV</div>
<div class="abs" style="left:1311px;top:266px;width:18px;height:18px;border-radius:50%;background:#3a76b0"></div>
<div class="lbl" style="left:1331px;top:266px;font-size:12px;line-height:14px;color:#222">Bin Size</div>
<div class="lbl" style="left:1417px;top:267px;font-family:'Liberation Mono';font-size:12.2px;line-height:16px;color:#222;white-space:pre">949.332686144</div>
<div class="lbl" style="left:1514px;top:266px;font-size:12px;line-height:16px;color:#222">nV</div>
<div class="abs" style="left:1311px;top:289px;width:18px;height:18px;border-radius:50%;background:#3a76b0"></div>
<div class="lbl" style="left:1331px;top:289px;font-size:12px;line-height:14px;color:#222">SNR</div>
<div class="lbl" style="left:1417px;top:290px;font-family:'Liberation Mono';font-size:12.2px;line-height:16px;color:#222;white-space:pre"> 78.272726961</div>
<div class="lbl" style="left:1514px;top:289px;font-size:12px;line-height:16px;color:#222">dB</div>
<div class="abs" style="left:1311px;top:312px;width:18px;height:18px;border-radius:50%;background:#3a76b0"></div>
<div class="lbl" style="left:1331px;top:312px;font-size:12px;line-height:14px;color:#222">Rice Fit</div>
<div class="lbl" style="left:1417px;top:313px;font-family:'Liberation Mono';font-size:12.2px;line-height:16px;color:#222;white-space:pre"> 10.434679360</div>
<div class="lbl" style="left:1514px;top:312px;font-size:12px;line-height:16px;color:#222">%</div>
<div class="abs" style="left:1310px;top:631px;width:100px;height:8px;background:#d2d2d2"></div>
<svg class="abs" style="left:1312px;top:643px" width="70" height="16" fill="none" stroke="#444" stroke-width="1.1">
 <path d="M3,3 h10 M6,3 v-1.5 h4 v1.5 M4,4 l1,10 h6 l1,-10 M6.5,6 v6 M9.5,6 v6"/>
 <path d="M55,3 h10 M58,3 v-1.5 h4 v1.5 M56,4 l1,10 h6 l1,-10 M58.5,6 v6 M61.5,6 v6"/>
</svg>
<div class="lbl" style="left:1330px;top:643px;font-size:13px;line-height:15px;color:#332">All</div>
<div class="lbl" style="left:1496.5px;top:642px;font-size:13px;line-height:16px;color:#111">Unit Prefix</div>
<div class="abs" style="left:1561px;top:643px;width:28px;height:16px;border-radius:8px;background:#40a8f0"></div>
<div class="abs" style="left:1574px;top:645px;width:13px;height:12px;border-radius:50%;background:#fff"></div>
<div class="lbl" style="left:1311px;top:671px;font-size:13px;line-height:16px;font-weight:bold;color:#111">Save</div>
<div class="abs" style="left:1310px;top:689px;width:60px;height:20px;background:#3f4a52;border-radius:2px"></div>
<div class="lbl" style="left:1327px;top:691px;font-size:13px;line-height:16px;color:#ddd">CSV</div>

<!-- DATA TRANSFER -->
<div class="abs" style="left:1614px;top:74px;width:290px;height:206px;background:#fcfcfc;box-shadow:0 1px 3px rgba(0,0,0,.15)"></div>
<svg class="abs" style="left:1624px;top:86px" width="24" height="24" fill="none" stroke="#2a2f33" stroke-width="1.2">
 <rect x="2.6" y="2.8" width="16" height="4.6"/><path d="M5,5.1 h1 M7,5.1 h1 M9,5.1 h1" stroke-width="1.4"/>
 <rect x="8.2" y="10.6" width="13.4" height="8"/><path d="M15,5.5 v9 l-2.5,-2.5 M15,14.5 l2.5,-2.5 M12.5,22 h5 M15,18.6 v3.4"/>
</svg>
<div class="lbl" style="left:1650px;top:90.5px;font-size:12.2px;line-height:15px;font-weight:bold;color:#2a2f33">Data Transfer</div>
<svg class="abs" style="left:1870px;top:88px" width="20" height="16" fill="none" stroke="#1f262b" stroke-width="1.5"><path d="M2,13 L10,5 L18,13"/></svg>
<div class="abs" style="left:1618px;top:118px;width:282px;height:10px;background:#e6e6e6"></div>

<!-- OVERLAY -->
<div class="ovl"></div>

<!-- HIGHLIGHTED -->
<div class="abs hi" style="left:840px;top:99px;width:270px;height:24px;background:#fff;border-radius:2px"></div>
<div class="lbl hi" style="left:849px;top:103px;font-size:13px;line-height:16px;color:#9aa5b0">Search for block...</div>

<!-- oscillators card -->
<div class="abs hi" style="left:1616px;top:127px;width:288px;height:152px;background:#fff;border-radius:2px;box-shadow:0 1px 4px rgba(0,0,0,.2)">
  <svg class="abs" style="left:10px;top:13px" width="24" height="24" fill="none" stroke="#2a2f33" stroke-width="1.2"><circle cx="12" cy="11" r="9.5"/><path d="M5,11.5 c2,-5 5,-5 7,0 c2,5 5,5 7,0"/></svg>
  <div class="lbl" style="left:36px;top:17px;font-size:11.8px;line-height:15px;font-weight:bold;color:#333">Oscillators 1/8</div>
  <svg class="abs" style="left:254px;top:16px" width="20" height="14" fill="none" stroke="#2a2f33" stroke-width="1.4"><path d="M2,11 L10,3 L18,11"/></svg>
  <div class="abs" style="left:4px;top:44px;width:280px;height:104px;background:#eeeeee"></div>
  <div class="abs" style="left:18px;top:62.5px;width:0;height:0;border-left:5.5px solid transparent;border-right:5.5px solid transparent;border-top:5.5px solid #2a3339"></div>
  <div class="lbl" style="left:40px;top:57px;font-size:11.5px;line-height:14px;font-weight:bold;color:#333">Oscillator 1</div>
  <div class="lbl" style="left:136px;top:56px;font-size:11px;line-height:15px;color:#444">f<sub style="font-size:7px">1</sub></div>
  <div class="abs" style="left:147px;top:52.5px;width:128.5px;height:22.5px;background:#fff;border:1px solid #e4e4e4"></div>
  <div class="lbl" style="left:161px;top:56px;font-size:12.9px;line-height:15px;color:#333">50.00000000 MHz</div>
  <div class="lbl" style="left:16px;top:89px;font-size:12.5px;line-height:15px;color:#444">Demodulator</div>
  <div class="badge" style="left:106px;top:86px;width:20px;height:20px;background:#5bc8cb;font-size:12px;line-height:20px">1</div>
  <div class="lbl" style="left:16px;top:121px;font-size:12.5px;line-height:15px;color:#444">Sine Gen</div>
  <div class="badge" style="left:106px;top:118px;width:20px;height:20px;background:#5bc8cb;font-size:12px;line-height:20px">1</div>
</div>

<!-- dashed lines -->
<div class="dash" style="left:223px;top:712px;width:47px"></div>
<div class="dash" style="left:423px;top:712px;width:98px"></div>
<div class="dash" style="left:908px;top:712px;width:430px"></div>
<div class="dash" style="left:1506px;top:712px;width:46px"></div>
<div class="dash" style="left:1266px;top:968px;width:51px"></div>
<div class="dash" style="left:1478px;top:968px;width:74px"></div>

<!-- connectors -->
<div class="lbl hi" style="left:173px;top:682px;font-size:9.6px;line-height:12px;color:#606060">Signal Input</div>
<div class="lbl hi" style="left:182px;top:707px;font-size:9.6px;line-height:12px;color:#606060">+V</div>
<div class="conn" style="left:198.5px;top:700.5px"></div>
<div class="lbl hi" style="left:1552px;top:682px;font-size:9.6px;line-height:12px;color:#606060">Aux Output</div>
<div class="lbl hi" style="left:1582px;top:707px;font-size:9.6px;line-height:12px;color:#606060">1</div>
<div class="conn" style="left:1551.5px;top:700.5px"></div>
<div class="lbl hi" style="left:1552px;top:938px;font-size:9.6px;line-height:12px;color:#606060">Signal Output</div>
<div class="lbl hi" style="left:1582px;top:963px;font-size:9.6px;line-height:12px;color:#606060">+V</div>
<div class="conn" style="left:1551.5px;top:956px"></div>

<!-- Voltage input block -->
<div class="abs hi" style="left:270px;top:684px;width:6px;height:58px;background:#333"></div>
<div class="abs hi" style="left:270px;top:702px;width:6px;height:21px;background:#6fdc86"></div>
<div class="abs hi" style="left:270px;top:688px;width:6px;height:1px;background:#777"></div>
<div class="abs hi" style="left:270px;top:737px;width:6px;height:1px;background:#777"></div>
<div class="blk" style="left:276px;top:683.5px;width:147px;height:58.5px">
  <svg class="abs" style="left:9px;top:8px" width="18" height="14" fill="none" stroke="#222" stroke-width="1.1"><path d="M6,3 a6,6 0 1 1 0,8 M1,7 h7 l-2,-2 M8,7 l-2,2"/><circle cx="11" cy="7" r="1" fill="#222"/></svg>
  <div class="lbl" style="left:27px;top:9px;font-size:9.7px;line-height:12px">Voltage Input</div>
  <div class="badge" style="left:86.5px;top:8px;width:15px;height:15px;background:#c9ebfd;color:#3a9de0;font-size:9px;line-height:15px;font-weight:normal">1</div>
  <div class="abs" style="left:9px;top:28.5px;width:129px;height:1px;background:#ececec"></div>
</div>
<div class="dot" style="left:267px;top:710px"></div>
<div class="dot" style="left:420px;top:710px"></div>

<!-- Demodulator block -->
<div class="blk" style="left:521px;top:596px;width:388px;height:233px;border:1.5px solid #3a9de0;border-radius:3px;background:linear-gradient(#fdfdfd,#f6f6f6)">
  <div class="abs" style="left:0;top:0;width:6.5px;height:100%;background:#5bc8cb"></div>
  <div class="lbl" style="left:15.5px;top:10px;font-size:9.6px;line-height:12px">Demodulator</div>
  <div class="badge" style="left:74px;top:8px;width:15px;height:15px;background:#5bc8cb;font-size:9px;line-height:15px">1</div>
  <div class="abs" style="left:15.5px;top:29.5px;width:360px;height:1px;background:#ececec"></div>
  <div class="abs" style="left:15.5px;top:57.5px;width:360px;height:1px;background:#ececec"></div>
  <div class="lbl" style="left:15.5px;top:66px;font-size:9.6px;line-height:12px">Input</div>
  <div class="inp" style="left:101px;top:63px;width:97px;height:18px"></div>
  <div class="lbl" style="left:107.5px;top:67px;font-size:9.6px;line-height:12px">Voltage Input 1</div>
  <div class="abs" style="left:183px;top:71px;width:0;height:0;border-left:4.5px solid transparent;border-right:4.5px solid transparent;border-top:4.5px solid #222"></div>
  <div class="abs" style="left:16px;top:87.5px;width:361px;height:46px;background:#fff;border:1px solid #efefef"></div>
  <div class="lbl" style="left:78px;top:92.5px;font-size:9.6px;line-height:12px">Phase</div>
  <div class="lbl" style="left:187px;top:92.5px;font-size:9.6px;line-height:12px">Oscillator</div>
  <div class="lbl" style="left:273px;top:92.5px;font-size:9.6px;line-height:12px">Frequency</div>
  <div class="lbl" style="left:21.5px;top:113px;font-size:9.6px;line-height:12px">Reference</div>
  <div class="inp" style="left:78px;top:109.5px;width:76px;height:18px"></div>
  <div class="lbl" style="left:78px;top:113px;width:69px;text-align:right;font-size:9.6px;line-height:12px">0.000 deg</div>
  <svg class="abs" style="left:158px;top:111px" width="16" height="16" fill="none" stroke="#222" stroke-width="1.1"><circle cx="8" cy="8" r="6.8" stroke-dasharray="2.5,0.8"/><path d="M8,11.5 V5 M6,7 l2,-2 2,2"/></svg>
  <div class="inp" style="left:187px;top:109.5px;width:24px;height:18px"></div>
  <div class="lbl" style="left:193px;top:113px;font-size:9.6px;line-height:12px">f<sub style="font-size:6px">1</sub></div>
  <div class="lbl" style="left:215.5px;top:113px;font-size:9.6px;line-height:12px">x</div>
  <div class="inp" style="left:222px;top:109.5px;width:36px;height:18px"></div>
  <div class="lbl" style="left:222px;top:113px;width:31px;text-align:right;font-size:9.6px;line-height:12px">1</div>
  <div class="lbl" style="left:263px;top:113px;font-size:9.6px;line-height:12px">=</div>
  <div class="abs" style="left:273px;top:109.5px;width:97px;height:18px;background:#efefef;border-radius:2px"></div>
  <div class="lbl" style="left:282.5px;top:113px;font-size:9.6px;line-height:12px">50.00000000 MHz</div>
  <div class="lbl" style="left:15.5px;top:143px;font-size:9.3px;line-height:12px;font-weight:bold;color:#333">Low Pass Filter</div>
  <div class="lbl" style="left:15.5px;top:164px;font-size:9.6px;line-height:12px">Time Constant</div>
  <div class="lbl" style="left:15.5px;top:186px;font-size:9.6px;line-height:12px">NEP Bandwidth</div>
  <div class="lbl" style="left:15.5px;top:207px;font-size:9.6px;line-height:12px">3dB Bandwidth</div>
  <div class="inp" style="left:100.5px;top:161.5px;width:97px;height:18.5px"></div>
  <div class="inp" style="left:100.5px;top:183px;width:97px;height:18.5px"></div>
  <div class="inp" style="left:100.5px;top:204.5px;width:97px;height:18px"></div>
  <div class="lbl" style="left:100.5px;top:164px;width:90px;text-align:right;font-size:9.6px;line-height:12px">7.812 ms</div>
  <div class="lbl" style="left:100.5px;top:186px;width:90px;text-align:right;font-size:9.6px;line-height:12px">10.001 Hz</div>
  <div class="lbl" style="left:100.5px;top:207px;width:90px;text-align:right;font-size:9.6px;line-height:12px">8.862 Hz</div>
  <div class="abs" style="left:227.5px;top:161.5px;width:1px;height:61px;background:#ececec"></div>
  <div class="lbl" style="left:243px;top:164px;font-size:9.6px;line-height:12px">Filter Order</div>
  <div class="lbl" style="left:243px;top:186px;font-size:9.6px;line-height:12px">Filter Bypass</div>
  <div class="inp" style="left:327.5px;top:161.5px;width:37px;height:18.5px"></div>
  <div class="lbl" style="left:334px;top:165px;font-size:9.6px;line-height:12px">4</div>
  <div class="abs" style="left:350px;top:169px;width:0;height:0;border-left:4.5px solid transparent;border-right:4.5px solid transparent;border-top:4.5px solid #222"></div>
  <div class="abs" style="left:327.5px;top:185px;width:21.5px;height:12.5px;border-radius:7px;background:#7a7a7a"></div>
  <div class="abs" style="left:329px;top:186.5px;width:9.5px;height:9.5px;border-radius:50%;background:#fff"></div>
</div>

<!-- Aux Output block -->
<div class="abs hi" style="left:1337.5px;top:683.5px;width:6.5px;height:59px;background:#3a9de0;border-radius:2px 0 0 2px"></div>
<div class="blk" style="left:1344px;top:683.5px;width:156.5px;height:59px">
  <svg class="abs" style="left:8px;top:8px" width="18" height="14" fill="none" stroke="#222" stroke-width="1.1"><path d="M11,3 a6,6 0 1 0 0,8 M5,7 h12 l-2,-2 M17,7 l-2,2"/><circle cx="7" cy="7" r="1" fill="#222"/></svg>
  <div class="lbl" style="left:27px;top:9px;font-size:9.5px;line-height:12px">Aux Output</div>
  <div class="badge" style="left:77.5px;top:8px;width:15px;height:15px;background:#c9ebfd;color:#3a9de0;font-size:9px;line-height:15px;font-weight:normal">1</div>
  <div class="abs" style="left:9px;top:28.5px;width:138px;height:1px;background:#ececec"></div>
  <div class="lbl" style="left:9px;top:37px;font-size:9.5px;line-height:12px">Output Value:</div>
  <div class="abs" style="left:68.5px;top:34.5px;width:78.5px;height:17.5px;background:#efefef;border-radius:2px"></div>
  <div class="lbl" style="left:68.5px;top:37px;width:72px;text-align:right;font-size:9.5px;line-height:12px">0.000 V</div>
</div>
<div class="abs hi" style="left:1500px;top:684px;width:6.5px;height:58px;background:#333;border-radius:0 2px 2px 0"></div>
<div class="abs hi" style="left:1500px;top:707.5px;width:6.5px;height:2px;background:#6fdc86"></div>
<div class="abs hi" style="left:1500px;top:688px;width:6.5px;height:1px;background:#777"></div>
<div class="abs hi" style="left:1500px;top:737px;width:6.5px;height:1px;background:#777"></div>
<div class="dot" style="left:1334.5px;top:710px"></div>
<div class="dot" style="left:1503.5px;top:710px"></div>

<!-- Generators block -->
<div class="abs hi" style="left:1144.5px;top:930.5px;width:6px;height:76.5px;background:#3a9de0;border-radius:2px 0 0 2px"></div>
<div class="blk" style="left:1150.5px;top:930.5px;width:115px;height:76.5px">
  <div class="lbl" style="left:9px;top:10px;font-size:9.4px;line-height:12px">Generators</div>
  <div class="abs" style="left:9px;top:28.5px;width:97px;height:1px;background:#ececec"></div>
  <div class="lbl" style="left:9px;top:38px;font-size:9.4px;line-height:12px">Sine Gen</div>
  <div class="badge" style="left:9px;top:55px;width:15px;height:15px;background:#5bc8cb;font-size:9px;line-height:15px">1</div>
</div>
<div class="dot" style="left:1262.5px;top:966px"></div>

<!-- Signal Output block -->
<div class="abs hi" style="left:1317px;top:939.5px;width:6px;height:58px;background:#3a9de0;border-radius:2px 0 0 2px"></div>
<div class="blk" style="left:1323px;top:939.5px;width:155px;height:58px">
  <svg class="abs" style="left:8px;top:8px" width="18" height="14" fill="none" stroke="#222" stroke-width="1.1"><path d="M11,3 a6,6 0 1 0 0,8 M5,7 h12 l-2,-2 M17,7 l-2,2"/><circle cx="7" cy="7" r="1" fill="#222"/></svg>
  <div class="lbl" style="left:27.5px;top:9px;font-size:9.5px;line-height:12px">Signal Output</div>
  <div class="badge" style="left:88px;top:8px;width:15px;height:15px;background:#c9ebfd;color:#3a9de0;font-size:9px;line-height:15px;font-weight:normal">1</div>
  <div class="abs" style="left:109px;top:9px;width:21px;height:12px;border-radius:6px;background:#3a9de0"></div>
  <div class="abs" style="left:119px;top:10.5px;width:9px;height:9px;border-radius:50%;background:#fff"></div>
  <div class="abs" style="left:9px;top:28.5px;width:137px;height:1px;background:#ececec"></div>
</div>
<div class="dot" style="left:1314px;top:966px"></div>
<div class="dot" style="left:1475px;top:966px"></div>

<!-- zoom controls -->
<div class="abs hi" style="left:15px;top:961px;width:104px;height:40px;background:#fff;border-radius:3px;box-shadow:0 1px 4px rgba(0,0,0,.15)">
 <svg class="abs" style="left:0;top:0" width="104" height="40" fill="none" stroke="#333d45" stroke-width="1.3">
  <circle cx="22" cy="18" r="7.5"/><path d="M18,18 h8 M22,14 v8 M16.5,23.5 L10,29.5"/>
  <circle cx="54" cy="18" r="7.5"/><path d="M50,18 h8 M48.5,23.5 L42,29.5"/>
  <path d="M90.5,12 L82.5,20 M82.5,14 V20 H89 M73,30 L80.5,22.5 M74,22.5 H80.5 V29"/>
 </svg>
</div>

<!-- FOOTER -->
<div class="abs ftr">
  <div class="abs" style="left:0;top:0;width:1918px;height:31.5px;background:#2a2a2a"></div>
  <div class="abs" style="left:920.5px;top:4px;width:78.5px;height:2px;background:#3a9de0"></div>
  <div class="lbl" style="left:929px;top:10px;font-size:12.6px;line-height:15px;color:#3a9de0">DEV13018</div>
  <div class="abs" style="left:863px;top:36.5px;width:99px;height:22.5px;background:#fff;border-radius:1px"></div>
  <div class="lbl" style="left:863px;top:40px;width:99px;text-align:center;font-size:13px;line-height:15px;color:#333">API Log</div>
  <div class="abs" style="left:966px;top:36.5px;width:91px;height:22.5px;background:#3189c5;border-radius:1px"></div>
  <div class="lbl" style="left:966px;top:40px;width:91px;text-align:center;font-size:13px;line-height:15px;font-weight:bold;color:#fff">Setup</div>
</div>
</body></html>
